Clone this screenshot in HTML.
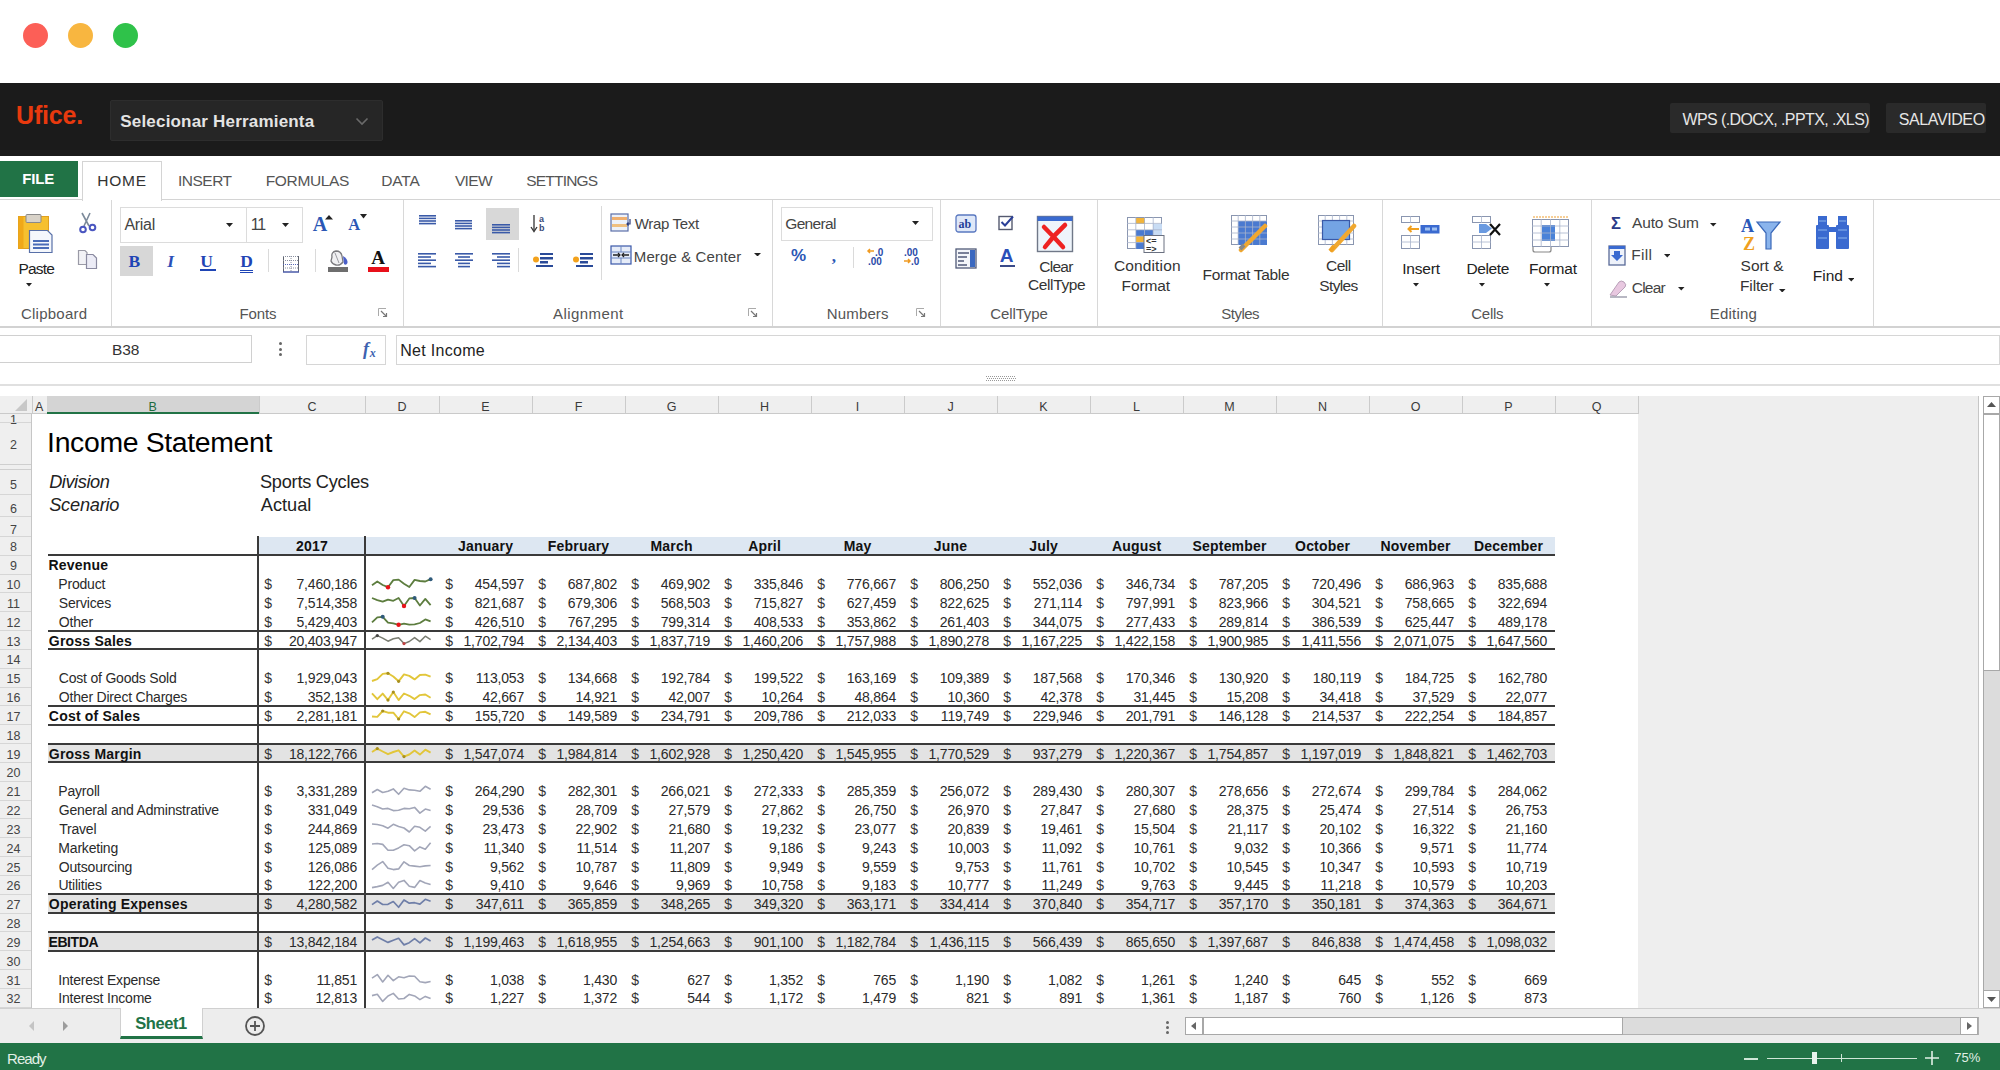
<!DOCTYPE html><html><head><meta charset="utf-8"><title>Ufice - Income Statement</title><style>
*{box-sizing:border-box;margin:0;padding:0}
html,body{width:2000px;height:1070px;overflow:hidden;background:#fff;font-family:"Liberation Sans",sans-serif;position:relative}
.abs{position:absolute}
.t{position:absolute;white-space:nowrap;line-height:1}
</style></head><body><div class="abs" style="left:23.0px;top:22.5px;width:25px;height:25px;border-radius:50%;background:#fc5f57"></div><div class="abs" style="left:68.0px;top:22.5px;width:25px;height:25px;border-radius:50%;background:#f8b640"></div><div class="abs" style="left:113.0px;top:22.5px;width:25px;height:25px;border-radius:50%;background:#2fc24a"></div><div class="abs" style="left:0px;top:83px;width:2000px;height:73px;background:#1b1b1b;"></div><div class="t" style="top:102.53px;font-size:25px;color:#e8390e;font-weight:bold;letter-spacing:-0.17px;left:16.00px;">Ufice.</div><div class="abs" style="left:110px;top:100px;width:272.5px;height:41px;background:#262626;border:1px solid #2d2d2d;border-radius:2px"></div><div class="t" style="top:112.80px;font-size:17px;color:#e4e4e4;font-weight:bold;letter-spacing:0.19px;left:120.26px;">Selecionar Herramienta</div><svg class="abs" style="left:355px;top:117px" width="14" height="9"><path d="M1.5 1.5 L7 7 L12.5 1.5" stroke="#6a6a6a" stroke-width="1.6" fill="none"/></svg><div class="abs" style="left:1670px;top:103px;width:200px;height:30px;background:#2a2a2a;border-radius:2px"></div><div class="t" style="top:111.96px;font-size:16px;color:#e6e6e6;letter-spacing:-0.60px;left:1682.43px;">WPS (.DOCX, .PPTX, .XLS)</div><div class="abs" style="left:1886px;top:103px;width:100px;height:30px;background:#2a2a2a;border-radius:2px"></div><div class="t" style="top:111.96px;font-size:16px;color:#e6e6e6;letter-spacing:-0.40px;left:1898.77px;">SALAVIDEO</div><div class="abs" style="left:0px;top:161px;width:78px;height:36px;background:#217346;"></div><div class="t" style="top:171.37px;font-size:15px;color:#ffffff;font-weight:bold;letter-spacing:-0.14px;left:22.25px;">FILE</div><div class="abs" style="left:82px;top:161px;width:80px;height:40px;background:#fff;border:1px solid #d4d4d4;border-bottom:none"></div><div class="t" style="top:173.04px;font-size:15.5px;color:#333;letter-spacing:0.81px;left:97.23px;">HOME</div><div class="t" style="top:173.04px;font-size:15.5px;color:#555;letter-spacing:-0.51px;left:178.07px;">INSERT</div><div class="t" style="top:173.04px;font-size:15.5px;color:#555;letter-spacing:-0.34px;left:265.73px;">FORMULAS</div><div class="t" style="top:173.04px;font-size:15.5px;color:#555;letter-spacing:-0.18px;left:381.23px;">DATA</div><div class="t" style="top:173.04px;font-size:15.5px;color:#555;letter-spacing:-0.66px;left:454.93px;">VIEW</div><div class="t" style="top:173.04px;font-size:15.5px;color:#555;letter-spacing:-0.80px;left:526.30px;">SETTINGS</div><div class="abs" style="left:0px;top:199px;width:82px;height:1px;background:#d4d4d4;"></div><div class="abs" style="left:161px;top:199px;width:1839px;height:1px;background:#d4d4d4;"></div><div class="abs" style="left:0px;top:326px;width:2000px;height:1.5px;background:#d2d2d2;"></div><div class="abs" style="left:111px;top:200px;width:1px;height:126px;background:#d8d8d8;"></div><div class="abs" style="left:403px;top:200px;width:1px;height:126px;background:#d8d8d8;"></div><div class="abs" style="left:772px;top:200px;width:1px;height:126px;background:#d8d8d8;"></div><div class="abs" style="left:940px;top:200px;width:1px;height:126px;background:#d8d8d8;"></div><div class="abs" style="left:1097px;top:200px;width:1px;height:126px;background:#d8d8d8;"></div><div class="abs" style="left:1382px;top:200px;width:1px;height:126px;background:#d8d8d8;"></div><div class="abs" style="left:1591px;top:200px;width:1px;height:126px;background:#d8d8d8;"></div><div class="abs" style="left:1873px;top:200px;width:1px;height:126px;background:#d8d8d8;"></div><div class="t" style="top:306.02px;font-size:15px;color:#555;letter-spacing:0.25px;left:20.94px;">Clipboard</div><div class="t" style="top:306.02px;font-size:15px;color:#555;letter-spacing:-0.11px;left:239.47px;">Fonts</div><div class="t" style="top:306.02px;font-size:15px;color:#555;letter-spacing:0.43px;left:552.97px;">Alignment</div><div class="t" style="top:306.02px;font-size:15px;color:#555;letter-spacing:0.15px;left:826.77px;">Numbers</div><div class="t" style="top:306.02px;font-size:15px;color:#555;letter-spacing:-0.11px;left:990.24px;">CellType</div><div class="t" style="top:306.02px;font-size:15px;color:#555;letter-spacing:-0.52px;left:1221.32px;">Styles</div><div class="t" style="top:306.02px;font-size:15px;color:#555;letter-spacing:-0.26px;left:1471.24px;">Cells</div><div class="t" style="top:306.02px;font-size:15px;color:#555;letter-spacing:0.22px;left:1709.77px;">Editing</div><div class="abs" style="left:-2px;top:335px;width:254px;height:28px;background:#fff;border:1px solid #d0d0d0"></div><div class="t" style="top:342.24px;font-size:15.5px;color:#333;letter-spacing:-0.07px;left:111.93px;">B38</div><div class="abs" style="left:278.7px;top:342px;width:3px;height:3px;background:#666;border-radius:50%"></div><div class="abs" style="left:278.7px;top:347.5px;width:3px;height:3px;background:#666;border-radius:50%"></div><div class="abs" style="left:278.7px;top:353px;width:3px;height:3px;background:#666;border-radius:50%"></div><div class="abs" style="left:305.5px;top:334.5px;width:80px;height:30px;background:#fff;border:1px solid #d6d6d6"></div><div class="t" style="top:339.71px;font-size:18px;color:#3d62b0;font-weight:bold;font-style:italic;font-family:'Liberation Serif',serif;left:363.00px;">f</div><div class="t" style="top:347.31px;font-size:12px;color:#3d62b0;font-weight:bold;font-style:italic;font-family:'Liberation Serif',serif;left:369.65px;">x</div><div class="abs" style="left:396px;top:334.5px;width:1604px;height:30px;background:#fff;border:1px solid #d6d6d6"></div><div class="t" style="top:342.66px;font-size:16px;color:#222;letter-spacing:0.30px;left:400.19px;">Net Income</div><div class="abs" style="left:0px;top:384px;width:2000px;height:2px;background:#e0e0e0;"></div><svg class="abs" style="left:986px;top:376px" width="30" height="6" viewBox="0 0 30 6"><rect x="0" y="0" width="1" height="1" fill="#999"/><rect x="1" y="2" width="1" height="1" fill="#999"/><rect x="0" y="4" width="1" height="1" fill="#999"/><rect x="2" y="0" width="1" height="1" fill="#999"/><rect x="3" y="2" width="1" height="1" fill="#999"/><rect x="2" y="4" width="1" height="1" fill="#999"/><rect x="4" y="0" width="1" height="1" fill="#999"/><rect x="5" y="2" width="1" height="1" fill="#999"/><rect x="4" y="4" width="1" height="1" fill="#999"/><rect x="6" y="0" width="1" height="1" fill="#999"/><rect x="7" y="2" width="1" height="1" fill="#999"/><rect x="6" y="4" width="1" height="1" fill="#999"/><rect x="8" y="0" width="1" height="1" fill="#999"/><rect x="9" y="2" width="1" height="1" fill="#999"/><rect x="8" y="4" width="1" height="1" fill="#999"/><rect x="10" y="0" width="1" height="1" fill="#999"/><rect x="11" y="2" width="1" height="1" fill="#999"/><rect x="10" y="4" width="1" height="1" fill="#999"/><rect x="12" y="0" width="1" height="1" fill="#999"/><rect x="13" y="2" width="1" height="1" fill="#999"/><rect x="12" y="4" width="1" height="1" fill="#999"/><rect x="14" y="0" width="1" height="1" fill="#999"/><rect x="15" y="2" width="1" height="1" fill="#999"/><rect x="14" y="4" width="1" height="1" fill="#999"/><rect x="16" y="0" width="1" height="1" fill="#999"/><rect x="17" y="2" width="1" height="1" fill="#999"/><rect x="16" y="4" width="1" height="1" fill="#999"/><rect x="18" y="0" width="1" height="1" fill="#999"/><rect x="19" y="2" width="1" height="1" fill="#999"/><rect x="18" y="4" width="1" height="1" fill="#999"/><rect x="20" y="0" width="1" height="1" fill="#999"/><rect x="21" y="2" width="1" height="1" fill="#999"/><rect x="20" y="4" width="1" height="1" fill="#999"/><rect x="22" y="0" width="1" height="1" fill="#999"/><rect x="23" y="2" width="1" height="1" fill="#999"/><rect x="22" y="4" width="1" height="1" fill="#999"/><rect x="24" y="0" width="1" height="1" fill="#999"/><rect x="25" y="2" width="1" height="1" fill="#999"/><rect x="24" y="4" width="1" height="1" fill="#999"/><rect x="26" y="0" width="1" height="1" fill="#999"/><rect x="27" y="2" width="1" height="1" fill="#999"/><rect x="26" y="4" width="1" height="1" fill="#999"/><rect x="28" y="0" width="1" height="1" fill="#999"/><rect x="29" y="2" width="1" height="1" fill="#999"/><rect x="28" y="4" width="1" height="1" fill="#999"/></svg><svg class="abs" style="left:17px;top:213px" width="36" height="41" viewBox="0 0 36 41"><rect x="1.5" y="3.5" width="30" height="32" fill="#f6c02f" stroke="#e0a020" stroke-width="1"/><rect x="1.5" y="3.5" width="5" height="32" fill="#f0a818"/><rect x="9" y="1.5" width="15" height="8" rx="1" fill="#d8d2c8" stroke="#8a8a8a" stroke-width="1"/><path d="M12.5 17.5 H30.5 L35 22 V39.5 H12.5 Z" fill="#f4f7fc" stroke="#5870a8" stroke-width="1.2"/><path d="M16 28 H32 M16 31.5 H32 M16 35 H32" stroke="#4a6cb8" stroke-width="2"/></svg><div class="t" style="top:260.54px;font-size:15.5px;color:#222;letter-spacing:-0.79px;left:18.43px;">Paste</div><svg class="abs" style="left:26.0px;top:283px" width="6" height="3.5"><path d="M0 0 H6 L3.0 3.5 Z" fill="#222"/></svg><svg class="abs" style="left:78px;top:212px" width="20" height="23" viewBox="0 0 20 23"><path d="M4 1 L11 14 M12 1 L6 14" stroke="#7c8a9a" stroke-width="1.6" fill="none"/><circle cx="5" cy="17.5" r="2.8" stroke="#4a56c0" stroke-width="2" fill="none"/><circle cx="14.5" cy="15.5" r="2.8" stroke="#4a56c0" stroke-width="2" fill="none"/></svg><svg class="abs" style="left:77px;top:249px" width="22" height="21" viewBox="0 0 22 21"><path d="M1.5 1.5 H8 L10 3.5 V15.5 H1.5 Z" fill="#f2f2f6" stroke="#9a9aa6" stroke-width="1.2"/><path d="M9.5 5.5 H16 L19.5 9 V19.5 H9.5 Z" fill="#ececf6" stroke="#8a8aa0" stroke-width="1.2"/></svg><div class="abs" style="left:120px;top:207px;width:127px;height:36px;background:#fff;border:1px solid #dcdcdc"></div><div class="abs" style="left:246px;top:207px;width:57px;height:36px;background:#fff;border:1px solid #dcdcdc"></div><div class="t" style="top:217.06px;font-size:16px;color:#444;letter-spacing:-0.30px;left:124.47px;">Arial</div><svg class="abs" style="left:226.0px;top:222.5px" width="7" height="4"><path d="M0 0 H7 L3.5 4 Z" fill="#222"/></svg><div class="t" style="top:217.06px;font-size:16px;color:#444;letter-spacing:-1.20px;left:250.78px;">11</div><svg class="abs" style="left:281.5px;top:222.5px" width="7" height="4"><path d="M0 0 H7 L3.5 4 Z" fill="#222"/></svg><div class="t" style="top:213.75px;font-size:20px;color:#2b57b5;font-weight:bold;font-family:'Liberation Serif',serif;left:312.80px;">A</div><svg class="abs" style="left:325px;top:214.5px" width="8" height="5" viewBox="0 0 8 5"><path d="M0 4.5 L4 0 L8 4.5 Z" fill="#222"/></svg><div class="t" style="top:216.59px;font-size:16.5px;color:#2b57b5;font-weight:bold;font-family:'Liberation Serif',serif;left:348.34px;">A</div><svg class="abs" style="left:359.5px;top:214px" width="7" height="5" viewBox="0 0 7 5"><path d="M0 0 H7 L3.5 4.5 Z" fill="#222"/></svg><div class="abs" style="left:120px;top:246px;width:33px;height:30px;background:#d7d7d7;"></div><div class="t" style="top:252.60px;font-size:17.5px;color:#1f45b5;font-weight:bold;font-family:'Liberation Serif',serif;left:128.51px;">B</div><div class="t" style="top:252.60px;font-size:17.5px;color:#2b4fb8;font-weight:bold;font-style:italic;font-family:'Liberation Serif',serif;left:167.17px;">I</div><div class="t" style="top:252.60px;font-size:17.5px;color:#1f45b5;font-weight:bold;font-family:'Liberation Serif',serif;left:200.16px;">U</div><div class="abs" style="left:200px;top:269px;width:16px;height:1.6px;background:#1f45b5;"></div><div class="t" style="top:252.60px;font-size:17.5px;color:#1f45b5;font-weight:bold;font-family:'Liberation Serif',serif;left:240.19px;">D</div><div class="abs" style="left:240px;top:269.5px;width:13px;height:1.3px;background:#1f45b5;"></div><div class="abs" style="left:240px;top:272px;width:13px;height:1.3px;background:#1f45b5;"></div><div class="abs" style="left:268px;top:249px;width:1px;height:23px;background:#dadada;"></div><svg class="abs" style="left:282px;top:255px" width="18" height="18" viewBox="0 0 18 18"><path d="M1.5 1 V17 M16.5 1 V17" stroke="#60646e" stroke-width="1"/><path d="M9 1 V17 M1 1.5 H17 M1 5.5 H17 M1 13 H17" stroke="#8a90a0" stroke-width="1" stroke-dasharray="1 1"/><path d="M1 9.5 H17" stroke="#5a6ab8" stroke-width="1" stroke-dasharray="1 1"/><path d="M1 17 H17" stroke="#4a5aa8" stroke-width="1.5"/></svg><div class="abs" style="left:315px;top:249px;width:1px;height:23px;background:#dadada;"></div><svg class="abs" style="left:327px;top:249px" width="23" height="24" viewBox="0 0 23 24"><path d="M5 8 Q4 3 9 2 Q14 2 15 7 L16 13 Q13 17 9 16 Q5 15 4 12 Z" fill="#f0f0f2" stroke="#7a7a7e" stroke-width="1.3"/><path d="M8 4 Q10 9 12 14" stroke="#9a9aa0" stroke-width="1"/><path d="M16 7 Q21 10 20.5 14 Q19 17 17 15 Z" fill="#4a5fc8"/><rect x="1" y="18" width="20" height="5" fill="#6e6e6e"/></svg><div class="t" style="top:248.13px;font-size:19px;color:#111;font-weight:bold;font-family:'Liberation Serif',serif;left:371.31px;">A</div><div class="abs" style="left:368px;top:267px;width:20.5px;height:5px;background:#e8101a;"></div><svg class="abs" style="left:378px;top:308px" width="10" height="10" viewBox="0 0 10 10"><path d="M0.5 8 V0.5 H8" stroke="#aaa" stroke-width="1" fill="none"/><path d="M3 3 L8.5 8.5 M8.5 5 V8.5 H5" stroke="#777" stroke-width="1.2" fill="none"/></svg><svg class="abs" style="left:419px;top:214.5px" width="17" height="12" viewBox="0 0 17 12"><rect x="0" y="0.0" width="17" height="1.6" fill="#3a5aa8"/><rect x="0" y="2.6" width="17" height="1.6" fill="#3a5aa8"/><rect x="0" y="5.2" width="17" height="1.6" fill="#3a5aa8"/><rect x="0" y="7.800000000000001" width="17" height="1.6" fill="#3a5aa8"/></svg><svg class="abs" style="left:455px;top:220px" width="17" height="12" viewBox="0 0 17 12"><rect x="0" y="0.0" width="17" height="1.6" fill="#3a5aa8"/><rect x="0" y="2.6" width="17" height="1.6" fill="#3a5aa8"/><rect x="0" y="5.2" width="17" height="1.6" fill="#3a5aa8"/><rect x="0" y="7.800000000000001" width="17" height="1.6" fill="#3a5aa8"/></svg><div class="abs" style="left:485.5px;top:208px;width:33px;height:31.5px;background:#d8d8d8;"></div><svg class="abs" style="left:492px;top:224px" width="18" height="12" viewBox="0 0 18 12"><rect x="0" y="0.0" width="18" height="1.6" fill="#3a5aa8"/><rect x="0" y="2.6" width="18" height="1.6" fill="#3a5aa8"/><rect x="0" y="5.2" width="18" height="1.6" fill="#3a5aa8"/><rect x="0" y="7.800000000000001" width="18" height="1.6" fill="#3a5aa8"/></svg><svg class="abs" style="left:529px;top:214px" width="20" height="20" viewBox="0 0 20 20"><path d="M5 1 V16" stroke="#333" stroke-width="1.3"/><path d="M2 13 L5 17.5 L8 13" stroke="#333" stroke-width="1.3" fill="none"/><text x="10" y="8" font-size="9" font-family="Liberation Sans" font-weight="bold" fill="#3a4a78">a</text><text x="10" y="17" font-size="9" font-family="Liberation Sans" font-weight="bold" fill="#3a4a78">b</text></svg><svg class="abs" style="left:418px;top:252.5px" width="18" height="18" viewBox="0 0 18 18"><rect x="0" y="0.0" width="18" height="1.6" fill="#3a5aa8"/><rect x="0" y="3.2" width="13" height="1.6" fill="#3a5aa8"/><rect x="0" y="6.4" width="18" height="1.6" fill="#3a5aa8"/><rect x="0" y="9.600000000000001" width="13" height="1.6" fill="#3a5aa8"/><rect x="0" y="12.8" width="18" height="1.6" fill="#3a5aa8"/></svg><svg class="abs" style="left:455px;top:252.5px" width="18" height="18" viewBox="0 0 18 18"><rect x="0.0" y="0.0" width="18" height="1.6" fill="#3a5aa8"/><rect x="3.0" y="3.2" width="12" height="1.6" fill="#3a5aa8"/><rect x="0.0" y="6.4" width="18" height="1.6" fill="#3a5aa8"/><rect x="3.0" y="9.600000000000001" width="12" height="1.6" fill="#3a5aa8"/><rect x="3.0" y="12.8" width="12" height="1.6" fill="#3a5aa8"/></svg><svg class="abs" style="left:492px;top:252.5px" width="18" height="18" viewBox="0 0 18 18"><rect x="0" y="0.0" width="18" height="1.6" fill="#3a5aa8"/><rect x="5" y="3.2" width="13" height="1.6" fill="#3a5aa8"/><rect x="0" y="6.4" width="18" height="1.6" fill="#3a5aa8"/><rect x="5" y="9.600000000000001" width="13" height="1.6" fill="#3a5aa8"/><rect x="5" y="12.8" width="13" height="1.6" fill="#3a5aa8"/></svg><div class="abs" style="left:518px;top:248px;width:1px;height:24px;background:#dadada;"></div><svg class="abs" style="left:532px;top:250px" width="22" height="20" viewBox="0 0 22 20"><rect x="8" y="3" width="13" height="2" fill="#2a4a98"/><rect x="8" y="7" width="13" height="2.5" fill="#2a4a98"/><rect x="8" y="11" width="8" height="2.5" fill="#2a4a98"/><rect x="4" y="15" width="17" height="2" fill="#2a4a98"/><circle cx="4" cy="9.5" r="3" fill="#f3a21c"/></svg><svg class="abs" style="left:572px;top:250px" width="22" height="20" viewBox="0 0 22 20"><rect x="8" y="3" width="13" height="2" fill="#2a4a98"/><rect x="8" y="7" width="13" height="2.5" fill="#2a4a98"/><rect x="8" y="11" width="8" height="2.5" fill="#2a4a98"/><rect x="4" y="15" width="17" height="2" fill="#2a4a98"/><circle cx="4" cy="9.5" r="3" fill="#f3a21c"/></svg><div class="abs" style="left:601px;top:206px;width:1px;height:74px;background:#dadada;"></div><svg class="abs" style="left:610px;top:213px" width="23" height="20" viewBox="0 0 23 20"><rect x="1" y="1" width="17" height="17" fill="#eef2fa" stroke="#5a6ea8" stroke-width="1.2"/><rect x="2" y="4" width="15" height="3" fill="#f0b070"/><rect x="2" y="11" width="15" height="3" fill="#f0c080"/><path d="M20 6 V11 H17 M18.5 9.5 L17 11 L18.5 12.5" stroke="#2a3a78" stroke-width="1.2" fill="none"/></svg><div class="t" style="top:215.52px;font-size:15px;color:#444;letter-spacing:-0.34px;left:634.83px;">Wrap Text</div><svg class="abs" style="left:610px;top:245px" width="22" height="20" viewBox="0 0 22 20"><rect x="1" y="1" width="20" height="18" fill="#e6ecf8" stroke="#3a58a8" stroke-width="1.2"/><path d="M1 7 H21 M1 13 H21 M11 1 V7 M11 13 V19" stroke="#6a86c0" stroke-width="1"/><path d="M3 10 H9 M13 10 H19" stroke="#222" stroke-width="1.4"/><path d="M8 8 L10 10 L8 12 M14 8 L12 10 L14 12" stroke="#222" stroke-width="1.2" fill="none"/></svg><div class="t" style="top:248.62px;font-size:15px;color:#444;letter-spacing:0.12px;left:633.77px;">Merge &amp; Center</div><svg class="abs" style="left:753.8px;top:252.7px" width="7" height="3.5"><path d="M0 0 H7 L3.5 3.5 Z" fill="#222"/></svg><svg class="abs" style="left:748px;top:308px" width="10" height="10" viewBox="0 0 10 10"><path d="M0.5 8 V0.5 H8" stroke="#aaa" stroke-width="1" fill="none"/><path d="M3 3 L8.5 8.5 M8.5 5 V8.5 H5" stroke="#777" stroke-width="1.2" fill="none"/></svg><div class="abs" style="left:781px;top:207px;width:152px;height:34px;background:#fff;border:1px solid #dcdcdc"></div><div class="t" style="top:216.24px;font-size:15.5px;color:#444;letter-spacing:-0.64px;left:785.22px;">General</div><svg class="abs" style="left:912.3px;top:221px" width="7" height="4"><path d="M0 0 H7 L3.5 4 Z" fill="#222"/></svg><div class="t" style="top:246.60px;font-size:17px;color:#2b57b5;font-weight:bold;left:790.88px;">%</div><div class="t" style="top:247.90px;font-size:17px;color:#2b57b5;font-weight:bold;font-family:'Liberation Serif',serif;left:831.78px;">,</div><div class="abs" style="left:852.5px;top:247px;width:1px;height:21px;background:#dadada;"></div><svg class="abs" style="left:866px;top:247px" width="22" height="20" viewBox="0 0 22 20"><path d="M2 4 H8 M4 2 L2 4 L4 6" stroke="#f09a20" stroke-width="1.5" fill="none"/><text x="9" y="8.5" font-size="10" font-family="Liberation Sans" font-weight="bold" fill="#2a4aa8">.0</text><text x="2" y="18" font-size="10" font-family="Liberation Sans" font-weight="bold" fill="#2a4aa8">.00</text></svg><svg class="abs" style="left:902px;top:247px" width="22" height="20" viewBox="0 0 22 20"><text x="2" y="8.5" font-size="10" font-family="Liberation Sans" font-weight="bold" fill="#2a4aa8">.00</text><path d="M2 14 H8 M6 12 L8 14 L6 16" stroke="#f09a20" stroke-width="1.5" fill="none"/><text x="9" y="18" font-size="10" font-family="Liberation Sans" font-weight="bold" fill="#2a4aa8">.0</text></svg><svg class="abs" style="left:916px;top:308px" width="10" height="10" viewBox="0 0 10 10"><path d="M0.5 8 V0.5 H8" stroke="#aaa" stroke-width="1" fill="none"/><path d="M3 3 L8.5 8.5 M8.5 5 V8.5 H5" stroke="#777" stroke-width="1.2" fill="none"/></svg><svg class="abs" style="left:955px;top:214px" width="23" height="20" viewBox="0 0 23 20"><rect x="1" y="1" width="20" height="17" rx="2.5" fill="#dfe8f8" stroke="#5a78c0" stroke-width="1.3"/><text x="3.5" y="14" font-size="12" font-family="Liberation Serif" font-weight="bold" fill="#1f3f98">ab</text></svg><svg class="abs" style="left:998px;top:215px" width="17" height="16" viewBox="0 0 17 16"><rect x="1" y="1.5" width="13" height="13" fill="#fff" stroke="#555a70" stroke-width="1.4"/><path d="M3.5 7 L7 10.5 L15 1.5" stroke="#2a3f98" stroke-width="2" fill="none"/></svg><svg class="abs" style="left:955px;top:248px" width="23" height="22" viewBox="0 0 23 22"><rect x="1" y="1" width="20" height="19" fill="#f4f6fa" stroke="#505a78" stroke-width="1.3"/><path d="M3 5 H14 M3 9 H12 M3 13 H9 M3 17 H12" stroke="#505a78" stroke-width="1.3"/><rect x="15" y="2" width="5" height="17" fill="#3a68c0"/></svg><div class="t" style="top:246.48px;font-size:19px;color:#2b4fb8;font-weight:bold;left:999.83px;">A</div><div class="abs" style="left:1000px;top:265px;width:15px;height:2px;background:#3a4a88;"></div><svg class="abs" style="left:1036px;top:215px" width="38" height="38" viewBox="0 0 38 38"><rect x="1.5" y="1.5" width="35" height="35" fill="#eef4fb" stroke="#707888" stroke-width="1.4"/><rect x="1.5" y="1.5" width="35" height="4.5" fill="#3a6ad0"/><path d="M8 12 Q18 22 27 32 M29 10 Q18 20 9 32" stroke="#ee2222" stroke-width="4.5" fill="none" stroke-linecap="round"/></svg><div class="t" style="top:258.74px;font-size:15.5px;color:#333;letter-spacing:-0.70px;left:1039.21px;">Clear</div><div class="t" style="top:277.34px;font-size:15.5px;color:#333;letter-spacing:-0.38px;left:1028.01px;">CellType</div><svg class="abs" style="left:1127px;top:217px" width="38" height="37" viewBox="0 0 38 37"><rect x="0.5" y="0.5" width="34" height="31" fill="#fff" stroke="#8a96b0" stroke-width="1"/><rect x="9" y="1" width="9" height="6" fill="#f2b43a"/><rect x="9" y="13" width="17" height="6" fill="#4a7ad0"/><rect x="26" y="7" width="9" height="12" fill="#c8dcf4"/><rect x="9" y="19" width="9" height="6" fill="#f2b43a"/><rect x="9" y="25" width="9" height="7" fill="#4a7ad0"/><path d="M8.8 0 V32" stroke="#a8b4cc" stroke-width="0.8"/><path d="M17.5 0 V32" stroke="#a8b4cc" stroke-width="0.8"/><path d="M26.2 0 V32" stroke="#a8b4cc" stroke-width="0.8"/><path d="M0 6.4 H35" stroke="#a8b4cc" stroke-width="0.8"/><path d="M0 12.8 H35" stroke="#a8b4cc" stroke-width="0.8"/><path d="M0 19.2 H35" stroke="#a8b4cc" stroke-width="0.8"/><path d="M0 25.6 H35" stroke="#a8b4cc" stroke-width="0.8"/><rect x="17" y="18.5" width="20" height="17" fill="#fff" stroke="#6a7080" stroke-width="1"/><text x="19" y="27" font-size="9" font-weight="bold" font-family="Liberation Sans" fill="#333">&lt;=</text><text x="19" y="34.5" font-size="9" font-weight="bold" font-family="Liberation Sans" fill="#333">=&gt;</text></svg><div class="t" style="top:257.54px;font-size:15.5px;color:#333;letter-spacing:0.14px;left:1113.91px;">Condition</div><div class="t" style="top:277.84px;font-size:15.5px;color:#333;letter-spacing:-0.10px;left:1121.53px;">Format</div><svg class="abs" style="left:1231px;top:215px" width="40" height="38" viewBox="0 0 40 38"><rect x="0.5" y="0.5" width="35" height="29" fill="#fff" stroke="#8a96b0" stroke-width="1"/><rect x="7" y="6" width="29" height="24" fill="#4a7ad0"/><path d="M7.2 0 V30" stroke="#a8b4cc" stroke-width="0.8"/><path d="M14.4 0 V30" stroke="#a8b4cc" stroke-width="0.8"/><path d="M21.6 0 V30" stroke="#a8b4cc" stroke-width="0.8"/><path d="M28.8 0 V30" stroke="#a8b4cc" stroke-width="0.8"/><path d="M0 6.0 H36" stroke="#a8b4cc" stroke-width="0.8"/><path d="M0 12.0 H36" stroke="#a8b4cc" stroke-width="0.8"/><path d="M0 18.0 H36" stroke="#a8b4cc" stroke-width="0.8"/><path d="M0 24.0 H36" stroke="#a8b4cc" stroke-width="0.8"/><path d="M10 35 L34 11" stroke="#f0a830" stroke-width="4.5" stroke-linecap="round"/><path d="M9 34 L13 30" stroke="#888" stroke-width="4"/></svg><div class="t" style="top:267.04px;font-size:15.5px;color:#333;letter-spacing:-0.28px;left:1202.53px;">Format Table</div><svg class="abs" style="left:1318px;top:215px" width="40" height="38" viewBox="0 0 40 38"><rect x="0.5" y="0.5" width="35" height="29" fill="#fff" stroke="#8a96b0" stroke-width="1"/><path d="M7.2 0 V30" stroke="#a8b4cc" stroke-width="0.8"/><path d="M14.4 0 V30" stroke="#a8b4cc" stroke-width="0.8"/><path d="M21.6 0 V30" stroke="#a8b4cc" stroke-width="0.8"/><path d="M28.8 0 V30" stroke="#a8b4cc" stroke-width="0.8"/><path d="M0 6.0 H36" stroke="#a8b4cc" stroke-width="0.8"/><path d="M0 12.0 H36" stroke="#a8b4cc" stroke-width="0.8"/><path d="M0 18.0 H36" stroke="#a8b4cc" stroke-width="0.8"/><path d="M0 24.0 H36" stroke="#a8b4cc" stroke-width="0.8"/><rect x="4.5" y="5.5" width="27" height="19" fill="#74a4e4" stroke="#3a5aa8" stroke-width="1.2"/><path d="M14 35 L36 11" stroke="#f0a830" stroke-width="4.5" stroke-linecap="round"/><path d="M12 36 L16 31" stroke="#f0a020" stroke-width="4"/></svg><div class="t" style="top:257.54px;font-size:15.5px;color:#333;letter-spacing:-0.43px;left:1325.91px;">Cell</div><div class="t" style="top:277.84px;font-size:15.5px;color:#333;letter-spacing:-0.65px;left:1319.30px;">Styles</div><svg class="abs" style="left:1401px;top:216px" width="40" height="34" viewBox="0 0 40 34"><g><rect x="0.5" y="0.5" width="18" height="6" fill="#fff" stroke="#8a96b0" stroke-width="1"/><path d="M9.5 0 V7" stroke="#a8b4cc" stroke-width="0.8"/></g><g transform="translate(0,19)"><rect x="0.5" y="0.5" width="18" height="13" fill="#fff" stroke="#8a96b0" stroke-width="1"/><path d="M9.5 0 V14" stroke="#a8b4cc" stroke-width="0.8"/><path d="M0 7.0 H19" stroke="#a8b4cc" stroke-width="0.8"/></g><rect x="19.5" y="9" width="19" height="8.5" fill="#3a6ad0"/><path d="M24 13 H29 M31 13 H36" stroke="#9ec0f0" stroke-width="3"/><path d="M8 13 H18" stroke="#f0a020" stroke-width="2"/><path d="M10.5 10 L7.5 13 L10.5 16" stroke="#f0a020" stroke-width="2" fill="none"/></svg><div class="t" style="top:260.54px;font-size:15.5px;color:#222;letter-spacing:-0.18px;left:1402.17px;">Insert</div><svg class="abs" style="left:1413.0px;top:283px" width="6" height="3.5"><path d="M0 0 H6 L3.0 3.5 Z" fill="#222"/></svg><svg class="abs" style="left:1472px;top:216px" width="32" height="34" viewBox="0 0 32 34"><g><rect x="0.5" y="0.5" width="18" height="6" fill="#fff" stroke="#8a96b0" stroke-width="1"/><path d="M9.5 0 V7" stroke="#a8b4cc" stroke-width="0.8"/></g><g transform="translate(0,19)"><rect x="0.5" y="0.5" width="18" height="13" fill="#fff" stroke="#8a96b0" stroke-width="1"/><path d="M9.5 0 V14" stroke="#a8b4cc" stroke-width="0.8"/><path d="M0 7.0 H19" stroke="#a8b4cc" stroke-width="0.8"/></g><path d="M7 8 H14 L20 12.5 L14 17 H7 Z" fill="#6a9ae0"/><path d="M18 8 L28 19 M28 8 L18 19" stroke="#111" stroke-width="2.2"/></svg><div class="t" style="top:260.54px;font-size:15.5px;color:#222;letter-spacing:-0.39px;left:1466.43px;">Delete</div><svg class="abs" style="left:1478.6px;top:283px" width="6" height="3.5"><path d="M0 0 H6 L3.0 3.5 Z" fill="#222"/></svg><svg class="abs" style="left:1532px;top:215px" width="38" height="38" viewBox="0 0 38 38"><path d="M1 2 H37" stroke="#f0a030" stroke-width="1.2" stroke-dasharray="2 1"/><g transform="translate(0,4)"><rect x="0.5" y="0.5" width="36" height="27" fill="#fff" stroke="#8a96b0" stroke-width="1"/><rect x="10" y="6" width="13" height="16" fill="#4a82d8"/><path d="M9.2 0 V28" stroke="#a8b4cc" stroke-width="0.8"/><path d="M18.5 0 V28" stroke="#a8b4cc" stroke-width="0.8"/><path d="M27.8 0 V28" stroke="#a8b4cc" stroke-width="0.8"/><path d="M0 7.0 H37" stroke="#a8b4cc" stroke-width="0.8"/><path d="M0 14.0 H37" stroke="#a8b4cc" stroke-width="0.8"/><path d="M0 21.0 H37" stroke="#a8b4cc" stroke-width="0.8"/></g><path d="M1 32 V35 Q1 37 3 37 H17 Q19 37 19 35 V32" stroke="#888" stroke-width="1.2" fill="#fff"/></svg><div class="t" style="top:260.54px;font-size:15.5px;color:#222;letter-spacing:-0.20px;left:1528.93px;">Format</div><svg class="abs" style="left:1544.0px;top:283px" width="6" height="3.5"><path d="M0 0 H6 L3.0 3.5 Z" fill="#222"/></svg><div class="t" style="top:214.88px;font-size:16.5px;color:#2a3a88;font-weight:bold;left:1611.07px;">&#931;</div><div class="t" style="top:215.04px;font-size:15.5px;color:#444;letter-spacing:-0.17px;left:1632.07px;">Auto Sum</div><svg class="abs" style="left:1710.35px;top:223px" width="6.5" height="3.5"><path d="M0 0 H6.5 L3.25 3.5 Z" fill="#222"/></svg><svg class="abs" style="left:1608px;top:245px" width="18" height="21" viewBox="0 0 18 21"><rect x="1" y="1" width="16" height="19" fill="#eef2fa" stroke="#5a6a98" stroke-width="1.3"/><rect x="1" y="1" width="16" height="3" fill="#3a6ad0"/><path d="M6 6 H12 V10 H15 L9 16 L3 10 H6 Z" fill="#3a6ad0"/></svg><div class="t" style="top:247.24px;font-size:15.5px;color:#444;letter-spacing:0.34px;left:1631.23px;">Fill</div><svg class="abs" style="left:1663.55px;top:254px" width="6.5" height="3.5"><path d="M0 0 H6.5 L3.25 3.5 Z" fill="#222"/></svg><svg class="abs" style="left:1607px;top:279px" width="21" height="19" viewBox="0 0 21 19"><path d="M3 16 L12 3 Q14 1 17 3 Q20 6 18 8 L9 17 Z" fill="#e8c8e0" stroke="#b8a0b8" stroke-width="1"/><path d="M3 18 H20" stroke="#9a9aaa" stroke-width="1.4"/></svg><div class="t" style="top:280.14px;font-size:15.5px;color:#444;letter-spacing:-0.75px;left:1631.71px;">Clear</div><svg class="abs" style="left:1678.25px;top:287px" width="6.5" height="3.5"><path d="M0 0 H6.5 L3.25 3.5 Z" fill="#222"/></svg><svg class="abs" style="left:1741px;top:216px" width="42" height="36" viewBox="0 0 42 36"><text x="0" y="16" font-size="18" font-family="Liberation Serif" font-weight="bold" fill="#2a58b8">A</text><text x="2" y="34" font-size="18" font-family="Liberation Serif" font-weight="bold" fill="#f0a020">Z</text><path d="M16 6 H39 L30 17 V33 H25 V17 Z" fill="#8ab4ec" stroke="#3a68b8" stroke-width="1.2"/></svg><div class="t" style="top:257.74px;font-size:15.5px;color:#333;letter-spacing:-0.03px;left:1740.60px;">Sort &amp;</div><div class="t" style="top:278.04px;font-size:15.5px;color:#333;letter-spacing:-0.14px;left:1740.03px;">Filter</div><svg class="abs" style="left:1779.25px;top:288.5px" width="6.5" height="3.5"><path d="M0 0 H6.5 L3.25 3.5 Z" fill="#222"/></svg><svg class="abs" style="left:1815px;top:216px" width="35" height="34" viewBox="0 0 35 34"><rect x="3" y="0" width="9" height="10" fill="#3a6ad0"/><rect x="23" y="0" width="9" height="10" fill="#3a6ad0"/><rect x="1" y="9" width="13" height="24" rx="1" fill="#3a6ad0"/><rect x="21" y="9" width="13" height="24" rx="1" fill="#3a6ad0"/><rect x="12" y="11" width="11" height="5" fill="#3a6ad0"/><path d="M4 5 H11 M24 5 H31 M3 14 H12 M23 14 H32 M3 22 H12 M23 22 H32" stroke="#8ab4ec" stroke-width="1.2"/></svg><div class="t" style="top:267.54px;font-size:15.5px;color:#222;letter-spacing:0.04px;left:1812.73px;">Find</div><svg class="abs" style="left:1847.75px;top:278.4px" width="6.5" height="3.5"><path d="M0 0 H6.5 L3.25 3.5 Z" fill="#222"/></svg><div class="abs" style="left:0px;top:396px;width:1638px;height:612px;background:#fff;"></div><div class="abs" style="left:1638px;top:396px;width:341px;height:612px;background:#eeeeee;border-right:1px solid #c6c6c6"></div><div class="abs" style="left:32px;top:396px;width:1606px;height:18px;background:#efefef;border-bottom:1px solid #cacaca"></div><div class="abs" style="left:46.5px;top:396px;width:212.5px;height:18px;background:#d4d4d4;border-bottom:2px solid #217346"></div><div class="abs" style="left:0px;top:396px;width:32px;height:18px;background:#efefef;border-bottom:1px solid #cacaca"></div><svg class="abs" style="left:14px;top:398px" width="14" height="14" viewBox="0 0 14 14"><path d="M13 1 L13 13 L1 13 Z" fill="#c8c8c8"/></svg><div class="t" style="top:401.02px;font-size:12.5px;color:#3a3a3a;left:34.98px;">A</div><div class="t" style="top:401.02px;font-size:12.5px;color:#1e6b3f;left:-147.25px;width:600px;text-align:center;">B</div><div class="t" style="top:401.02px;font-size:12.5px;color:#3a3a3a;left:12.00px;width:600px;text-align:center;">C</div><div class="abs" style="left:258.5px;top:396px;width:1px;height:18px;background:#cbcbcb;"></div><div class="t" style="top:401.02px;font-size:12.5px;color:#3a3a3a;left:102.00px;width:600px;text-align:center;">D</div><div class="abs" style="left:364.5px;top:396px;width:1px;height:18px;background:#cbcbcb;"></div><div class="t" style="top:401.02px;font-size:12.5px;color:#3a3a3a;left:185.50px;width:600px;text-align:center;">E</div><div class="abs" style="left:438.5px;top:396px;width:1px;height:18px;background:#cbcbcb;"></div><div class="t" style="top:401.02px;font-size:12.5px;color:#3a3a3a;left:278.50px;width:600px;text-align:center;">F</div><div class="abs" style="left:531.5px;top:396px;width:1px;height:18px;background:#cbcbcb;"></div><div class="t" style="top:401.02px;font-size:12.5px;color:#3a3a3a;left:371.50px;width:600px;text-align:center;">G</div><div class="abs" style="left:624.5px;top:396px;width:1px;height:18px;background:#cbcbcb;"></div><div class="t" style="top:401.02px;font-size:12.5px;color:#3a3a3a;left:464.50px;width:600px;text-align:center;">H</div><div class="abs" style="left:717.5px;top:396px;width:1px;height:18px;background:#cbcbcb;"></div><div class="t" style="top:401.02px;font-size:12.5px;color:#3a3a3a;left:557.50px;width:600px;text-align:center;">I</div><div class="abs" style="left:810.5px;top:396px;width:1px;height:18px;background:#cbcbcb;"></div><div class="t" style="top:401.02px;font-size:12.5px;color:#3a3a3a;left:650.50px;width:600px;text-align:center;">J</div><div class="abs" style="left:903.5px;top:396px;width:1px;height:18px;background:#cbcbcb;"></div><div class="t" style="top:401.02px;font-size:12.5px;color:#3a3a3a;left:743.50px;width:600px;text-align:center;">K</div><div class="abs" style="left:996.5px;top:396px;width:1px;height:18px;background:#cbcbcb;"></div><div class="t" style="top:401.02px;font-size:12.5px;color:#3a3a3a;left:836.50px;width:600px;text-align:center;">L</div><div class="abs" style="left:1089.5px;top:396px;width:1px;height:18px;background:#cbcbcb;"></div><div class="t" style="top:401.02px;font-size:12.5px;color:#3a3a3a;left:929.50px;width:600px;text-align:center;">M</div><div class="abs" style="left:1182.5px;top:396px;width:1px;height:18px;background:#cbcbcb;"></div><div class="t" style="top:401.02px;font-size:12.5px;color:#3a3a3a;left:1022.50px;width:600px;text-align:center;">N</div><div class="abs" style="left:1275.5px;top:396px;width:1px;height:18px;background:#cbcbcb;"></div><div class="t" style="top:401.02px;font-size:12.5px;color:#3a3a3a;left:1115.50px;width:600px;text-align:center;">O</div><div class="abs" style="left:1368.5px;top:396px;width:1px;height:18px;background:#cbcbcb;"></div><div class="t" style="top:401.02px;font-size:12.5px;color:#3a3a3a;left:1208.50px;width:600px;text-align:center;">P</div><div class="abs" style="left:1461.5px;top:396px;width:1px;height:18px;background:#cbcbcb;"></div><div class="t" style="top:401.02px;font-size:12.5px;color:#3a3a3a;left:1296.50px;width:600px;text-align:center;">Q</div><div class="abs" style="left:1554.5px;top:396px;width:1px;height:18px;background:#cbcbcb;"></div><div class="abs" style="left:1637.5px;top:396px;width:1px;height:18px;background:#cbcbcb;"></div><div class="abs" style="left:32px;top:396px;width:1px;height:18px;background:#cbcbcb;"></div><div class="abs" style="left:0px;top:414px;width:32px;height:594px;background:#efefef;border-right:1px solid #c6c6c6"></div><div class="t" style="top:413.57px;font-size:12.5px;color:#444;left:-286.50px;width:600px;text-align:center;">1</div><div class="abs" style="left:0px;top:421.5px;width:31px;height:1px;background:#d6d6d6;"></div><div class="t" style="top:438.82px;font-size:12.5px;color:#444;left:-286.50px;width:600px;text-align:center;">2</div><div class="abs" style="left:0px;top:464.0px;width:31px;height:1px;background:#d6d6d6;"></div><div class="abs" style="left:0px;top:464px;width:31px;height:1px;background:#cfcfcf;"></div><div class="abs" style="left:0px;top:468.5px;width:31px;height:1px;background:#cfcfcf;"></div><div class="t" style="top:478.62px;font-size:12.5px;color:#444;left:-286.50px;width:600px;text-align:center;">5</div><div class="abs" style="left:0px;top:494.0px;width:31px;height:1px;background:#d6d6d6;"></div><div class="t" style="top:502.52px;font-size:12.5px;color:#444;left:-286.50px;width:600px;text-align:center;">6</div><div class="abs" style="left:0px;top:516.3px;width:31px;height:1px;background:#d6d6d6;"></div><div class="t" style="top:523.52px;font-size:12.5px;color:#444;left:-286.50px;width:600px;text-align:center;">7</div><div class="abs" style="left:0px;top:536.0px;width:31px;height:1px;background:#d6d6d6;"></div><div class="t" style="top:541.48px;font-size:12.5px;color:#444;left:-286.50px;width:600px;text-align:center;">8</div><div class="abs" style="left:0px;top:554.83px;width:31px;height:1px;background:#d6d6d6;"></div><div class="t" style="top:560.31px;font-size:12.5px;color:#444;left:-286.50px;width:600px;text-align:center;">9</div><div class="abs" style="left:0px;top:573.6600000000001px;width:31px;height:1px;background:#d6d6d6;"></div><div class="t" style="top:579.14px;font-size:12.5px;color:#444;left:-286.50px;width:600px;text-align:center;">10</div><div class="abs" style="left:0px;top:592.49px;width:31px;height:1px;background:#d6d6d6;"></div><div class="t" style="top:597.97px;font-size:12.5px;color:#444;left:-286.50px;width:600px;text-align:center;">11</div><div class="abs" style="left:0px;top:611.32px;width:31px;height:1px;background:#d6d6d6;"></div><div class="t" style="top:616.80px;font-size:12.5px;color:#444;left:-286.50px;width:600px;text-align:center;">12</div><div class="abs" style="left:0px;top:630.15px;width:31px;height:1px;background:#d6d6d6;"></div><div class="t" style="top:635.63px;font-size:12.5px;color:#444;left:-286.50px;width:600px;text-align:center;">13</div><div class="abs" style="left:0px;top:648.98px;width:31px;height:1px;background:#d6d6d6;"></div><div class="t" style="top:654.46px;font-size:12.5px;color:#444;left:-286.50px;width:600px;text-align:center;">14</div><div class="abs" style="left:0px;top:667.8100000000001px;width:31px;height:1px;background:#d6d6d6;"></div><div class="t" style="top:673.29px;font-size:12.5px;color:#444;left:-286.50px;width:600px;text-align:center;">15</div><div class="abs" style="left:0px;top:686.64px;width:31px;height:1px;background:#d6d6d6;"></div><div class="t" style="top:692.12px;font-size:12.5px;color:#444;left:-286.50px;width:600px;text-align:center;">16</div><div class="abs" style="left:0px;top:705.47px;width:31px;height:1px;background:#d6d6d6;"></div><div class="t" style="top:710.95px;font-size:12.5px;color:#444;left:-286.50px;width:600px;text-align:center;">17</div><div class="abs" style="left:0px;top:724.3000000000001px;width:31px;height:1px;background:#d6d6d6;"></div><div class="t" style="top:729.78px;font-size:12.5px;color:#444;left:-286.50px;width:600px;text-align:center;">18</div><div class="abs" style="left:0px;top:743.13px;width:31px;height:1px;background:#d6d6d6;"></div><div class="t" style="top:748.61px;font-size:12.5px;color:#444;left:-286.50px;width:600px;text-align:center;">19</div><div class="abs" style="left:0px;top:761.96px;width:31px;height:1px;background:#d6d6d6;"></div><div class="t" style="top:767.44px;font-size:12.5px;color:#444;left:-286.50px;width:600px;text-align:center;">20</div><div class="abs" style="left:0px;top:780.7900000000001px;width:31px;height:1px;background:#d6d6d6;"></div><div class="t" style="top:786.27px;font-size:12.5px;color:#444;left:-286.50px;width:600px;text-align:center;">21</div><div class="abs" style="left:0px;top:799.62px;width:31px;height:1px;background:#d6d6d6;"></div><div class="t" style="top:805.10px;font-size:12.5px;color:#444;left:-286.50px;width:600px;text-align:center;">22</div><div class="abs" style="left:0px;top:818.45px;width:31px;height:1px;background:#d6d6d6;"></div><div class="t" style="top:823.93px;font-size:12.5px;color:#444;left:-286.50px;width:600px;text-align:center;">23</div><div class="abs" style="left:0px;top:837.2800000000001px;width:31px;height:1px;background:#d6d6d6;"></div><div class="t" style="top:842.76px;font-size:12.5px;color:#444;left:-286.50px;width:600px;text-align:center;">24</div><div class="abs" style="left:0px;top:856.11px;width:31px;height:1px;background:#d6d6d6;"></div><div class="t" style="top:861.59px;font-size:12.5px;color:#444;left:-286.50px;width:600px;text-align:center;">25</div><div class="abs" style="left:0px;top:874.9399999999999px;width:31px;height:1px;background:#d6d6d6;"></div><div class="t" style="top:880.42px;font-size:12.5px;color:#444;left:-286.50px;width:600px;text-align:center;">26</div><div class="abs" style="left:0px;top:893.77px;width:31px;height:1px;background:#d6d6d6;"></div><div class="t" style="top:899.25px;font-size:12.5px;color:#444;left:-286.50px;width:600px;text-align:center;">27</div><div class="abs" style="left:0px;top:912.6px;width:31px;height:1px;background:#d6d6d6;"></div><div class="t" style="top:918.08px;font-size:12.5px;color:#444;left:-286.50px;width:600px;text-align:center;">28</div><div class="abs" style="left:0px;top:931.43px;width:31px;height:1px;background:#d6d6d6;"></div><div class="t" style="top:936.91px;font-size:12.5px;color:#444;left:-286.50px;width:600px;text-align:center;">29</div><div class="abs" style="left:0px;top:950.26px;width:31px;height:1px;background:#d6d6d6;"></div><div class="t" style="top:955.74px;font-size:12.5px;color:#444;left:-286.50px;width:600px;text-align:center;">30</div><div class="abs" style="left:0px;top:969.09px;width:31px;height:1px;background:#d6d6d6;"></div><div class="t" style="top:974.57px;font-size:12.5px;color:#444;left:-286.50px;width:600px;text-align:center;">31</div><div class="abs" style="left:0px;top:987.92px;width:31px;height:1px;background:#d6d6d6;"></div><div class="t" style="top:993.40px;font-size:12.5px;color:#444;left:-286.50px;width:600px;text-align:center;">32</div><div class="abs" style="left:0px;top:1006.75px;width:31px;height:1px;background:#d6d6d6;"></div><div class="t" style="top:428.49px;font-size:28.4px;color:#000;letter-spacing:-0.34px;left:47.08px;">Income Statement</div><div class="t" style="top:473.41px;font-size:18.2px;color:#222;font-style:italic;letter-spacing:-0.43px;left:49.14px;">Division</div><div class="t" style="top:473.41px;font-size:18.2px;color:#222;letter-spacing:-0.25px;left:259.97px;">Sports Cycles</div><div class="t" style="top:496.11px;font-size:18.2px;color:#222;font-style:italic;letter-spacing:-0.21px;left:49.18px;">Scenario</div><div class="t" style="top:496.11px;font-size:18.2px;color:#222;left:260.76px;">Actual</div><div class="abs" style="left:259px;top:536.5px;width:1296px;height:18.83px;background:#dde7f2;"></div><div class="t" style="top:539.48px;font-size:14px;color:#111;font-weight:bold;letter-spacing:0.20px;left:12.10px;width:600px;text-align:center;">2017</div><div class="t" style="top:539.48px;font-size:14px;color:#111;font-weight:bold;letter-spacing:0.20px;left:185.60px;width:600px;text-align:center;">January</div><div class="t" style="top:539.48px;font-size:14px;color:#111;font-weight:bold;letter-spacing:0.20px;left:278.60px;width:600px;text-align:center;">February</div><div class="t" style="top:539.48px;font-size:14px;color:#111;font-weight:bold;letter-spacing:0.20px;left:371.60px;width:600px;text-align:center;">March</div><div class="t" style="top:539.48px;font-size:14px;color:#111;font-weight:bold;letter-spacing:0.20px;left:464.60px;width:600px;text-align:center;">April</div><div class="t" style="top:539.48px;font-size:14px;color:#111;font-weight:bold;letter-spacing:0.20px;left:557.60px;width:600px;text-align:center;">May</div><div class="t" style="top:539.48px;font-size:14px;color:#111;font-weight:bold;letter-spacing:0.20px;left:650.60px;width:600px;text-align:center;">June</div><div class="t" style="top:539.48px;font-size:14px;color:#111;font-weight:bold;letter-spacing:0.20px;left:743.60px;width:600px;text-align:center;">July</div><div class="t" style="top:539.48px;font-size:14px;color:#111;font-weight:bold;letter-spacing:0.20px;left:836.60px;width:600px;text-align:center;">August</div><div class="t" style="top:539.48px;font-size:14px;color:#111;font-weight:bold;letter-spacing:0.20px;left:929.60px;width:600px;text-align:center;">September</div><div class="t" style="top:539.48px;font-size:14px;color:#111;font-weight:bold;letter-spacing:0.20px;left:1022.60px;width:600px;text-align:center;">October</div><div class="t" style="top:539.48px;font-size:14px;color:#111;font-weight:bold;letter-spacing:0.20px;left:1115.60px;width:600px;text-align:center;">November</div><div class="t" style="top:539.48px;font-size:14px;color:#111;font-weight:bold;letter-spacing:0.20px;left:1208.60px;width:600px;text-align:center;">December</div><div class="abs" style="left:48px;top:743.63px;width:1507px;height:18.83px;background:#e3e3e3;"></div><div class="abs" style="left:48px;top:894.27px;width:1507px;height:18.83px;background:#e3e3e3;"></div><div class="abs" style="left:48px;top:931.93px;width:1507px;height:18.83px;background:#e3e3e3;"></div><div class="abs" style="left:48px;top:554px;width:1507px;height:2px;background:#3a3a3a;"></div><div class="abs" style="left:48px;top:630px;width:1507px;height:2px;background:#3a3a3a;"></div><div class="abs" style="left:48px;top:648px;width:1507px;height:2px;background:#3a3a3a;"></div><div class="abs" style="left:48px;top:705px;width:1507px;height:2px;background:#3a3a3a;"></div><div class="abs" style="left:48px;top:724px;width:1507px;height:2px;background:#3a3a3a;"></div><div class="abs" style="left:48px;top:743px;width:1507px;height:2px;background:#3a3a3a;"></div><div class="abs" style="left:48px;top:761px;width:1507px;height:2px;background:#3a3a3a;"></div><div class="abs" style="left:48px;top:893px;width:1507px;height:2px;background:#3a3a3a;"></div><div class="abs" style="left:48px;top:912px;width:1507px;height:2px;background:#3a3a3a;"></div><div class="abs" style="left:48px;top:931px;width:1507px;height:2px;background:#3a3a3a;"></div><div class="abs" style="left:48px;top:950px;width:1507px;height:2px;background:#3a3a3a;"></div><div class="abs" style="left:257px;top:536px;width:2px;height:472px;background:#3a3a3a;"></div><div class="abs" style="left:364px;top:536px;width:2px;height:472px;background:#3a3a3a;"></div><div class="t" style="top:558.31px;font-size:14px;color:#111;font-weight:bold;letter-spacing:0.20px;left:48.46px;">Revenue</div><div class="t" style="top:577.14px;font-size:14px;color:#2a2a2a;letter-spacing:-0.20px;left:58.35px;">Product</div><div class="t" style="top:577.14px;font-size:14px;color:#333;left:264.35px;">$</div><div class="t" style="top:577.14px;font-size:14px;color:#2a2a2a;letter-spacing:-0.20px;left:-243.00px;width:600px;text-align:right;">7,460,186</div><div class="t" style="top:577.14px;font-size:14px;color:#333;left:445.35px;">$</div><div class="t" style="top:577.14px;font-size:14px;color:#2a2a2a;letter-spacing:-0.20px;left:-76.00px;width:600px;text-align:right;">454,597</div><div class="t" style="top:577.14px;font-size:14px;color:#333;left:538.35px;">$</div><div class="t" style="top:577.14px;font-size:14px;color:#2a2a2a;letter-spacing:-0.20px;left:17.00px;width:600px;text-align:right;">687,802</div><div class="t" style="top:577.14px;font-size:14px;color:#333;left:631.35px;">$</div><div class="t" style="top:577.14px;font-size:14px;color:#2a2a2a;letter-spacing:-0.20px;left:110.00px;width:600px;text-align:right;">469,902</div><div class="t" style="top:577.14px;font-size:14px;color:#333;left:724.35px;">$</div><div class="t" style="top:577.14px;font-size:14px;color:#2a2a2a;letter-spacing:-0.20px;left:203.00px;width:600px;text-align:right;">335,846</div><div class="t" style="top:577.14px;font-size:14px;color:#333;left:817.35px;">$</div><div class="t" style="top:577.14px;font-size:14px;color:#2a2a2a;letter-spacing:-0.20px;left:296.00px;width:600px;text-align:right;">776,667</div><div class="t" style="top:577.14px;font-size:14px;color:#333;left:910.35px;">$</div><div class="t" style="top:577.14px;font-size:14px;color:#2a2a2a;letter-spacing:-0.20px;left:389.00px;width:600px;text-align:right;">806,250</div><div class="t" style="top:577.14px;font-size:14px;color:#333;left:1003.35px;">$</div><div class="t" style="top:577.14px;font-size:14px;color:#2a2a2a;letter-spacing:-0.20px;left:482.00px;width:600px;text-align:right;">552,036</div><div class="t" style="top:577.14px;font-size:14px;color:#333;left:1096.35px;">$</div><div class="t" style="top:577.14px;font-size:14px;color:#2a2a2a;letter-spacing:-0.20px;left:575.00px;width:600px;text-align:right;">346,734</div><div class="t" style="top:577.14px;font-size:14px;color:#333;left:1189.35px;">$</div><div class="t" style="top:577.14px;font-size:14px;color:#2a2a2a;letter-spacing:-0.20px;left:668.00px;width:600px;text-align:right;">787,205</div><div class="t" style="top:577.14px;font-size:14px;color:#333;left:1282.35px;">$</div><div class="t" style="top:577.14px;font-size:14px;color:#2a2a2a;letter-spacing:-0.20px;left:761.00px;width:600px;text-align:right;">720,496</div><div class="t" style="top:577.14px;font-size:14px;color:#333;left:1375.35px;">$</div><div class="t" style="top:577.14px;font-size:14px;color:#2a2a2a;letter-spacing:-0.20px;left:854.00px;width:600px;text-align:right;">686,963</div><div class="t" style="top:577.14px;font-size:14px;color:#333;left:1468.35px;">$</div><div class="t" style="top:577.14px;font-size:14px;color:#2a2a2a;letter-spacing:-0.20px;left:947.00px;width:600px;text-align:right;">835,688</div><svg class="abs" style="left:0;top:0;overflow:visible" width="1" height="1"><path d="M372.0 585.3 L377.3 581.5 L382.7 585.0 L388.0 587.2 L393.3 580.1 L398.6 579.6 L404.0 583.7 L409.3 587.0 L414.6 579.9 L419.9 581.0 L425.3 581.5 L430.6 579.2" stroke="#5d7d3f" stroke-width="1.8" fill="none" stroke-linejoin="round"/><circle cx="388.0" cy="587.2" r="2.2" fill="#e8141a"/><circle cx="430.6" cy="579.2" r="2" fill="#2f5a7a"/></svg><div class="t" style="top:595.97px;font-size:14px;color:#2a2a2a;letter-spacing:-0.20px;left:58.86px;">Services</div><div class="t" style="top:595.97px;font-size:14px;color:#333;left:264.35px;">$</div><div class="t" style="top:595.97px;font-size:14px;color:#2a2a2a;letter-spacing:-0.20px;left:-243.00px;width:600px;text-align:right;">7,514,358</div><div class="t" style="top:595.97px;font-size:14px;color:#333;left:445.35px;">$</div><div class="t" style="top:595.97px;font-size:14px;color:#2a2a2a;letter-spacing:-0.20px;left:-76.00px;width:600px;text-align:right;">821,687</div><div class="t" style="top:595.97px;font-size:14px;color:#333;left:538.35px;">$</div><div class="t" style="top:595.97px;font-size:14px;color:#2a2a2a;letter-spacing:-0.20px;left:17.00px;width:600px;text-align:right;">679,306</div><div class="t" style="top:595.97px;font-size:14px;color:#333;left:631.35px;">$</div><div class="t" style="top:595.97px;font-size:14px;color:#2a2a2a;letter-spacing:-0.20px;left:110.00px;width:600px;text-align:right;">568,503</div><div class="t" style="top:595.97px;font-size:14px;color:#333;left:724.35px;">$</div><div class="t" style="top:595.97px;font-size:14px;color:#2a2a2a;letter-spacing:-0.20px;left:203.00px;width:600px;text-align:right;">715,827</div><div class="t" style="top:595.97px;font-size:14px;color:#333;left:817.35px;">$</div><div class="t" style="top:595.97px;font-size:14px;color:#2a2a2a;letter-spacing:-0.20px;left:296.00px;width:600px;text-align:right;">627,459</div><div class="t" style="top:595.97px;font-size:14px;color:#333;left:910.35px;">$</div><div class="t" style="top:595.97px;font-size:14px;color:#2a2a2a;letter-spacing:-0.20px;left:389.00px;width:600px;text-align:right;">822,625</div><div class="t" style="top:595.97px;font-size:14px;color:#333;left:1003.35px;">$</div><div class="t" style="top:595.97px;font-size:14px;color:#2a2a2a;letter-spacing:-0.20px;left:482.00px;width:600px;text-align:right;">271,114</div><div class="t" style="top:595.97px;font-size:14px;color:#333;left:1096.35px;">$</div><div class="t" style="top:595.97px;font-size:14px;color:#2a2a2a;letter-spacing:-0.20px;left:575.00px;width:600px;text-align:right;">797,991</div><div class="t" style="top:595.97px;font-size:14px;color:#333;left:1189.35px;">$</div><div class="t" style="top:595.97px;font-size:14px;color:#2a2a2a;letter-spacing:-0.20px;left:668.00px;width:600px;text-align:right;">823,966</div><div class="t" style="top:595.97px;font-size:14px;color:#333;left:1282.35px;">$</div><div class="t" style="top:595.97px;font-size:14px;color:#2a2a2a;letter-spacing:-0.20px;left:761.00px;width:600px;text-align:right;">304,521</div><div class="t" style="top:595.97px;font-size:14px;color:#333;left:1375.35px;">$</div><div class="t" style="top:595.97px;font-size:14px;color:#2a2a2a;letter-spacing:-0.20px;left:854.00px;width:600px;text-align:right;">758,665</div><div class="t" style="top:595.97px;font-size:14px;color:#333;left:1468.35px;">$</div><div class="t" style="top:595.97px;font-size:14px;color:#2a2a2a;letter-spacing:-0.20px;left:947.00px;width:600px;text-align:right;">322,694</div><svg class="abs" style="left:0;top:0;overflow:visible" width="1" height="1"><path d="M372.0 598.0 L377.3 600.1 L382.7 601.7 L388.0 599.6 L393.3 600.8 L398.6 598.0 L404.0 606.0 L409.3 598.4 L414.6 598.0 L419.9 605.5 L425.3 598.9 L430.6 605.2" stroke="#5d7d3f" stroke-width="1.8" fill="none" stroke-linejoin="round"/><circle cx="404.0" cy="606.0" r="2.2" fill="#e8141a"/><circle cx="414.6" cy="598.0" r="2" fill="#2f5a7a"/></svg><div class="t" style="top:614.80px;font-size:14px;color:#2a2a2a;letter-spacing:-0.20px;left:58.84px;">Other</div><div class="t" style="top:614.80px;font-size:14px;color:#333;left:264.35px;">$</div><div class="t" style="top:614.80px;font-size:14px;color:#2a2a2a;letter-spacing:-0.20px;left:-243.00px;width:600px;text-align:right;">5,429,403</div><div class="t" style="top:614.80px;font-size:14px;color:#333;left:445.35px;">$</div><div class="t" style="top:614.80px;font-size:14px;color:#2a2a2a;letter-spacing:-0.20px;left:-76.00px;width:600px;text-align:right;">426,510</div><div class="t" style="top:614.80px;font-size:14px;color:#333;left:538.35px;">$</div><div class="t" style="top:614.80px;font-size:14px;color:#2a2a2a;letter-spacing:-0.20px;left:17.00px;width:600px;text-align:right;">767,295</div><div class="t" style="top:614.80px;font-size:14px;color:#333;left:631.35px;">$</div><div class="t" style="top:614.80px;font-size:14px;color:#2a2a2a;letter-spacing:-0.20px;left:110.00px;width:600px;text-align:right;">799,314</div><div class="t" style="top:614.80px;font-size:14px;color:#333;left:724.35px;">$</div><div class="t" style="top:614.80px;font-size:14px;color:#2a2a2a;letter-spacing:-0.20px;left:203.00px;width:600px;text-align:right;">408,533</div><div class="t" style="top:614.80px;font-size:14px;color:#333;left:817.35px;">$</div><div class="t" style="top:614.80px;font-size:14px;color:#2a2a2a;letter-spacing:-0.20px;left:296.00px;width:600px;text-align:right;">353,862</div><div class="t" style="top:614.80px;font-size:14px;color:#333;left:910.35px;">$</div><div class="t" style="top:614.80px;font-size:14px;color:#2a2a2a;letter-spacing:-0.20px;left:389.00px;width:600px;text-align:right;">261,403</div><div class="t" style="top:614.80px;font-size:14px;color:#333;left:1003.35px;">$</div><div class="t" style="top:614.80px;font-size:14px;color:#2a2a2a;letter-spacing:-0.20px;left:482.00px;width:600px;text-align:right;">344,075</div><div class="t" style="top:614.80px;font-size:14px;color:#333;left:1096.35px;">$</div><div class="t" style="top:614.80px;font-size:14px;color:#2a2a2a;letter-spacing:-0.20px;left:575.00px;width:600px;text-align:right;">277,433</div><div class="t" style="top:614.80px;font-size:14px;color:#333;left:1189.35px;">$</div><div class="t" style="top:614.80px;font-size:14px;color:#2a2a2a;letter-spacing:-0.20px;left:668.00px;width:600px;text-align:right;">289,814</div><div class="t" style="top:614.80px;font-size:14px;color:#333;left:1282.35px;">$</div><div class="t" style="top:614.80px;font-size:14px;color:#2a2a2a;letter-spacing:-0.20px;left:761.00px;width:600px;text-align:right;">386,539</div><div class="t" style="top:614.80px;font-size:14px;color:#333;left:1375.35px;">$</div><div class="t" style="top:614.80px;font-size:14px;color:#2a2a2a;letter-spacing:-0.20px;left:854.00px;width:600px;text-align:right;">625,447</div><div class="t" style="top:614.80px;font-size:14px;color:#333;left:1468.35px;">$</div><div class="t" style="top:614.80px;font-size:14px;color:#2a2a2a;letter-spacing:-0.20px;left:947.00px;width:600px;text-align:right;">489,178</div><svg class="abs" style="left:0;top:0;overflow:visible" width="1" height="1"><path d="M372.0 622.4 L377.3 617.3 L382.7 616.8 L388.0 622.6 L393.3 623.4 L398.6 624.8 L404.0 623.6 L409.3 624.6 L414.6 624.4 L419.9 623.0 L425.3 619.4 L430.6 621.4" stroke="#5d7d3f" stroke-width="1.8" fill="none" stroke-linejoin="round"/><circle cx="398.6" cy="624.8" r="2.2" fill="#e8141a"/><circle cx="382.7" cy="616.8" r="2" fill="#2f5a7a"/></svg><div class="t" style="top:633.63px;font-size:14px;color:#111;font-weight:bold;letter-spacing:0.20px;left:48.83px;">Gross Sales</div><div class="t" style="top:633.63px;font-size:14px;color:#333;left:264.35px;">$</div><div class="t" style="top:633.63px;font-size:14px;color:#2a2a2a;letter-spacing:-0.20px;left:-243.00px;width:600px;text-align:right;">20,403,947</div><div class="t" style="top:633.63px;font-size:14px;color:#333;left:445.35px;">$</div><div class="t" style="top:633.63px;font-size:14px;color:#2a2a2a;letter-spacing:-0.20px;left:-76.00px;width:600px;text-align:right;">1,702,794</div><div class="t" style="top:633.63px;font-size:14px;color:#333;left:538.35px;">$</div><div class="t" style="top:633.63px;font-size:14px;color:#2a2a2a;letter-spacing:-0.20px;left:17.00px;width:600px;text-align:right;">2,134,403</div><div class="t" style="top:633.63px;font-size:14px;color:#333;left:631.35px;">$</div><div class="t" style="top:633.63px;font-size:14px;color:#2a2a2a;letter-spacing:-0.20px;left:110.00px;width:600px;text-align:right;">1,837,719</div><div class="t" style="top:633.63px;font-size:14px;color:#333;left:724.35px;">$</div><div class="t" style="top:633.63px;font-size:14px;color:#2a2a2a;letter-spacing:-0.20px;left:203.00px;width:600px;text-align:right;">1,460,206</div><div class="t" style="top:633.63px;font-size:14px;color:#333;left:817.35px;">$</div><div class="t" style="top:633.63px;font-size:14px;color:#2a2a2a;letter-spacing:-0.20px;left:296.00px;width:600px;text-align:right;">1,757,988</div><div class="t" style="top:633.63px;font-size:14px;color:#333;left:910.35px;">$</div><div class="t" style="top:633.63px;font-size:14px;color:#2a2a2a;letter-spacing:-0.20px;left:389.00px;width:600px;text-align:right;">1,890,278</div><div class="t" style="top:633.63px;font-size:14px;color:#333;left:1003.35px;">$</div><div class="t" style="top:633.63px;font-size:14px;color:#2a2a2a;letter-spacing:-0.20px;left:482.00px;width:600px;text-align:right;">1,167,225</div><div class="t" style="top:633.63px;font-size:14px;color:#333;left:1096.35px;">$</div><div class="t" style="top:633.63px;font-size:14px;color:#2a2a2a;letter-spacing:-0.20px;left:575.00px;width:600px;text-align:right;">1,422,158</div><div class="t" style="top:633.63px;font-size:14px;color:#333;left:1189.35px;">$</div><div class="t" style="top:633.63px;font-size:14px;color:#2a2a2a;letter-spacing:-0.20px;left:668.00px;width:600px;text-align:right;">1,900,985</div><div class="t" style="top:633.63px;font-size:14px;color:#333;left:1282.35px;">$</div><div class="t" style="top:633.63px;font-size:14px;color:#2a2a2a;letter-spacing:-0.20px;left:761.00px;width:600px;text-align:right;">1,411,556</div><div class="t" style="top:633.63px;font-size:14px;color:#333;left:1375.35px;">$</div><div class="t" style="top:633.63px;font-size:14px;color:#2a2a2a;letter-spacing:-0.20px;left:854.00px;width:600px;text-align:right;">2,071,075</div><div class="t" style="top:633.63px;font-size:14px;color:#333;left:1468.35px;">$</div><div class="t" style="top:633.63px;font-size:14px;color:#2a2a2a;letter-spacing:-0.20px;left:947.00px;width:600px;text-align:right;">1,647,560</div><svg class="abs" style="left:0;top:0;overflow:visible" width="1" height="1"><path d="M372.0 639.2 L377.3 635.6 L382.7 638.1 L388.0 641.2 L393.3 638.8 L398.6 637.7 L404.0 643.6 L409.3 641.5 L414.6 637.6 L419.9 641.6 L425.3 636.2 L430.6 639.7" stroke="#7a7d72" stroke-width="1.5" fill="none" stroke-linejoin="round"/><circle cx="404.0" cy="643.6" r="1.6" fill="#c04040"/><circle cx="377.3" cy="635.6" r="1.6" fill="#444"/></svg><div class="t" style="top:671.29px;font-size:14px;color:#2a2a2a;letter-spacing:-0.20px;left:58.79px;">Cost of Goods Sold</div><div class="t" style="top:671.29px;font-size:14px;color:#333;left:264.35px;">$</div><div class="t" style="top:671.29px;font-size:14px;color:#2a2a2a;letter-spacing:-0.20px;left:-243.00px;width:600px;text-align:right;">1,929,043</div><div class="t" style="top:671.29px;font-size:14px;color:#333;left:445.35px;">$</div><div class="t" style="top:671.29px;font-size:14px;color:#2a2a2a;letter-spacing:-0.20px;left:-76.00px;width:600px;text-align:right;">113,053</div><div class="t" style="top:671.29px;font-size:14px;color:#333;left:538.35px;">$</div><div class="t" style="top:671.29px;font-size:14px;color:#2a2a2a;letter-spacing:-0.20px;left:17.00px;width:600px;text-align:right;">134,668</div><div class="t" style="top:671.29px;font-size:14px;color:#333;left:631.35px;">$</div><div class="t" style="top:671.29px;font-size:14px;color:#2a2a2a;letter-spacing:-0.20px;left:110.00px;width:600px;text-align:right;">192,784</div><div class="t" style="top:671.29px;font-size:14px;color:#333;left:724.35px;">$</div><div class="t" style="top:671.29px;font-size:14px;color:#2a2a2a;letter-spacing:-0.20px;left:203.00px;width:600px;text-align:right;">199,522</div><div class="t" style="top:671.29px;font-size:14px;color:#333;left:817.35px;">$</div><div class="t" style="top:671.29px;font-size:14px;color:#2a2a2a;letter-spacing:-0.20px;left:296.00px;width:600px;text-align:right;">163,169</div><div class="t" style="top:671.29px;font-size:14px;color:#333;left:910.35px;">$</div><div class="t" style="top:671.29px;font-size:14px;color:#2a2a2a;letter-spacing:-0.20px;left:389.00px;width:600px;text-align:right;">109,389</div><div class="t" style="top:671.29px;font-size:14px;color:#333;left:1003.35px;">$</div><div class="t" style="top:671.29px;font-size:14px;color:#2a2a2a;letter-spacing:-0.20px;left:482.00px;width:600px;text-align:right;">187,568</div><div class="t" style="top:671.29px;font-size:14px;color:#333;left:1096.35px;">$</div><div class="t" style="top:671.29px;font-size:14px;color:#2a2a2a;letter-spacing:-0.20px;left:575.00px;width:600px;text-align:right;">170,346</div><div class="t" style="top:671.29px;font-size:14px;color:#333;left:1189.35px;">$</div><div class="t" style="top:671.29px;font-size:14px;color:#2a2a2a;letter-spacing:-0.20px;left:668.00px;width:600px;text-align:right;">130,920</div><div class="t" style="top:671.29px;font-size:14px;color:#333;left:1282.35px;">$</div><div class="t" style="top:671.29px;font-size:14px;color:#2a2a2a;letter-spacing:-0.20px;left:761.00px;width:600px;text-align:right;">180,119</div><div class="t" style="top:671.29px;font-size:14px;color:#333;left:1375.35px;">$</div><div class="t" style="top:671.29px;font-size:14px;color:#2a2a2a;letter-spacing:-0.20px;left:854.00px;width:600px;text-align:right;">184,725</div><div class="t" style="top:671.29px;font-size:14px;color:#333;left:1468.35px;">$</div><div class="t" style="top:671.29px;font-size:14px;color:#2a2a2a;letter-spacing:-0.20px;left:947.00px;width:600px;text-align:right;">162,780</div><svg class="abs" style="left:0;top:0;overflow:visible" width="1" height="1"><path d="M372.0 681.0 L377.3 679.1 L382.7 673.9 L388.0 673.3 L393.3 676.5 L398.6 681.3 L404.0 674.4 L409.3 675.9 L414.6 679.4 L419.9 675.0 L425.3 674.6 L430.6 676.6" stroke="#e2c63a" stroke-width="1.9" fill="none" stroke-linejoin="round"/><circle cx="398.6" cy="681.3" r="1.6" fill="#a89020"/><circle cx="388.0" cy="673.3" r="1.6" fill="#a89020"/></svg><div class="t" style="top:690.12px;font-size:14px;color:#2a2a2a;letter-spacing:-0.20px;left:58.84px;">Other Direct Charges</div><div class="t" style="top:690.12px;font-size:14px;color:#333;left:264.35px;">$</div><div class="t" style="top:690.12px;font-size:14px;color:#2a2a2a;letter-spacing:-0.20px;left:-243.00px;width:600px;text-align:right;">352,138</div><div class="t" style="top:690.12px;font-size:14px;color:#333;left:445.35px;">$</div><div class="t" style="top:690.12px;font-size:14px;color:#2a2a2a;letter-spacing:-0.20px;left:-76.00px;width:600px;text-align:right;">42,667</div><div class="t" style="top:690.12px;font-size:14px;color:#333;left:538.35px;">$</div><div class="t" style="top:690.12px;font-size:14px;color:#2a2a2a;letter-spacing:-0.20px;left:17.00px;width:600px;text-align:right;">14,921</div><div class="t" style="top:690.12px;font-size:14px;color:#333;left:631.35px;">$</div><div class="t" style="top:690.12px;font-size:14px;color:#2a2a2a;letter-spacing:-0.20px;left:110.00px;width:600px;text-align:right;">42,007</div><div class="t" style="top:690.12px;font-size:14px;color:#333;left:724.35px;">$</div><div class="t" style="top:690.12px;font-size:14px;color:#2a2a2a;letter-spacing:-0.20px;left:203.00px;width:600px;text-align:right;">10,264</div><div class="t" style="top:690.12px;font-size:14px;color:#333;left:817.35px;">$</div><div class="t" style="top:690.12px;font-size:14px;color:#2a2a2a;letter-spacing:-0.20px;left:296.00px;width:600px;text-align:right;">48,864</div><div class="t" style="top:690.12px;font-size:14px;color:#333;left:910.35px;">$</div><div class="t" style="top:690.12px;font-size:14px;color:#2a2a2a;letter-spacing:-0.20px;left:389.00px;width:600px;text-align:right;">10,360</div><div class="t" style="top:690.12px;font-size:14px;color:#333;left:1003.35px;">$</div><div class="t" style="top:690.12px;font-size:14px;color:#2a2a2a;letter-spacing:-0.20px;left:482.00px;width:600px;text-align:right;">42,378</div><div class="t" style="top:690.12px;font-size:14px;color:#333;left:1096.35px;">$</div><div class="t" style="top:690.12px;font-size:14px;color:#2a2a2a;letter-spacing:-0.20px;left:575.00px;width:600px;text-align:right;">31,445</div><div class="t" style="top:690.12px;font-size:14px;color:#333;left:1189.35px;">$</div><div class="t" style="top:690.12px;font-size:14px;color:#2a2a2a;letter-spacing:-0.20px;left:668.00px;width:600px;text-align:right;">15,208</div><div class="t" style="top:690.12px;font-size:14px;color:#333;left:1282.35px;">$</div><div class="t" style="top:690.12px;font-size:14px;color:#2a2a2a;letter-spacing:-0.20px;left:761.00px;width:600px;text-align:right;">34,418</div><div class="t" style="top:690.12px;font-size:14px;color:#333;left:1375.35px;">$</div><div class="t" style="top:690.12px;font-size:14px;color:#2a2a2a;letter-spacing:-0.20px;left:854.00px;width:600px;text-align:right;">37,529</div><div class="t" style="top:690.12px;font-size:14px;color:#333;left:1468.35px;">$</div><div class="t" style="top:690.12px;font-size:14px;color:#2a2a2a;letter-spacing:-0.20px;left:947.00px;width:600px;text-align:right;">22,077</div><svg class="abs" style="left:0;top:0;overflow:visible" width="1" height="1"><path d="M372.0 693.4 L377.3 699.2 L382.7 693.6 L388.0 700.1 L393.3 692.1 L398.6 700.1 L404.0 693.5 L409.3 695.8 L414.6 699.1 L419.9 695.1 L425.3 694.5 L430.6 697.7" stroke="#e2c63a" stroke-width="1.9" fill="none" stroke-linejoin="round"/><circle cx="388.0" cy="700.1" r="1.6" fill="#a89020"/><circle cx="393.3" cy="692.1" r="1.6" fill="#a89020"/></svg><div class="t" style="top:708.95px;font-size:14px;color:#111;font-weight:bold;letter-spacing:0.20px;left:48.83px;">Cost of Sales</div><div class="t" style="top:708.95px;font-size:14px;color:#333;left:264.35px;">$</div><div class="t" style="top:708.95px;font-size:14px;color:#2a2a2a;letter-spacing:-0.20px;left:-243.00px;width:600px;text-align:right;">2,281,181</div><div class="t" style="top:708.95px;font-size:14px;color:#333;left:445.35px;">$</div><div class="t" style="top:708.95px;font-size:14px;color:#2a2a2a;letter-spacing:-0.20px;left:-76.00px;width:600px;text-align:right;">155,720</div><div class="t" style="top:708.95px;font-size:14px;color:#333;left:538.35px;">$</div><div class="t" style="top:708.95px;font-size:14px;color:#2a2a2a;letter-spacing:-0.20px;left:17.00px;width:600px;text-align:right;">149,589</div><div class="t" style="top:708.95px;font-size:14px;color:#333;left:631.35px;">$</div><div class="t" style="top:708.95px;font-size:14px;color:#2a2a2a;letter-spacing:-0.20px;left:110.00px;width:600px;text-align:right;">234,791</div><div class="t" style="top:708.95px;font-size:14px;color:#333;left:724.35px;">$</div><div class="t" style="top:708.95px;font-size:14px;color:#2a2a2a;letter-spacing:-0.20px;left:203.00px;width:600px;text-align:right;">209,786</div><div class="t" style="top:708.95px;font-size:14px;color:#333;left:817.35px;">$</div><div class="t" style="top:708.95px;font-size:14px;color:#2a2a2a;letter-spacing:-0.20px;left:296.00px;width:600px;text-align:right;">212,033</div><div class="t" style="top:708.95px;font-size:14px;color:#333;left:910.35px;">$</div><div class="t" style="top:708.95px;font-size:14px;color:#2a2a2a;letter-spacing:-0.20px;left:389.00px;width:600px;text-align:right;">119,749</div><div class="t" style="top:708.95px;font-size:14px;color:#333;left:1003.35px;">$</div><div class="t" style="top:708.95px;font-size:14px;color:#2a2a2a;letter-spacing:-0.20px;left:482.00px;width:600px;text-align:right;">229,946</div><div class="t" style="top:708.95px;font-size:14px;color:#333;left:1096.35px;">$</div><div class="t" style="top:708.95px;font-size:14px;color:#2a2a2a;letter-spacing:-0.20px;left:575.00px;width:600px;text-align:right;">201,791</div><div class="t" style="top:708.95px;font-size:14px;color:#333;left:1189.35px;">$</div><div class="t" style="top:708.95px;font-size:14px;color:#2a2a2a;letter-spacing:-0.20px;left:668.00px;width:600px;text-align:right;">146,128</div><div class="t" style="top:708.95px;font-size:14px;color:#333;left:1282.35px;">$</div><div class="t" style="top:708.95px;font-size:14px;color:#2a2a2a;letter-spacing:-0.20px;left:761.00px;width:600px;text-align:right;">214,537</div><div class="t" style="top:708.95px;font-size:14px;color:#333;left:1375.35px;">$</div><div class="t" style="top:708.95px;font-size:14px;color:#2a2a2a;letter-spacing:-0.20px;left:854.00px;width:600px;text-align:right;">222,254</div><div class="t" style="top:708.95px;font-size:14px;color:#333;left:1468.35px;">$</div><div class="t" style="top:708.95px;font-size:14px;color:#2a2a2a;letter-spacing:-0.20px;left:947.00px;width:600px;text-align:right;">184,857</div><svg class="abs" style="left:0;top:0;overflow:visible" width="1" height="1"><path d="M372.0 716.5 L377.3 716.9 L382.7 711.0 L388.0 712.7 L393.3 712.6 L398.6 719.0 L404.0 711.3 L409.3 713.3 L414.6 717.1 L419.9 712.4 L425.3 711.8 L430.6 714.4" stroke="#e2c63a" stroke-width="1.9" fill="none" stroke-linejoin="round"/><circle cx="398.6" cy="719.0" r="1.6" fill="#a89020"/><circle cx="382.7" cy="711.0" r="1.6" fill="#a89020"/></svg><div class="t" style="top:746.61px;font-size:14px;color:#111;font-weight:bold;letter-spacing:0.20px;left:48.83px;">Gross Margin</div><div class="t" style="top:746.61px;font-size:14px;color:#333;left:264.35px;">$</div><div class="t" style="top:746.61px;font-size:14px;color:#2a2a2a;letter-spacing:-0.20px;left:-243.00px;width:600px;text-align:right;">18,122,766</div><div class="t" style="top:746.61px;font-size:14px;color:#333;left:445.35px;">$</div><div class="t" style="top:746.61px;font-size:14px;color:#2a2a2a;letter-spacing:-0.20px;left:-76.00px;width:600px;text-align:right;">1,547,074</div><div class="t" style="top:746.61px;font-size:14px;color:#333;left:538.35px;">$</div><div class="t" style="top:746.61px;font-size:14px;color:#2a2a2a;letter-spacing:-0.20px;left:17.00px;width:600px;text-align:right;">1,984,814</div><div class="t" style="top:746.61px;font-size:14px;color:#333;left:631.35px;">$</div><div class="t" style="top:746.61px;font-size:14px;color:#2a2a2a;letter-spacing:-0.20px;left:110.00px;width:600px;text-align:right;">1,602,928</div><div class="t" style="top:746.61px;font-size:14px;color:#333;left:724.35px;">$</div><div class="t" style="top:746.61px;font-size:14px;color:#2a2a2a;letter-spacing:-0.20px;left:203.00px;width:600px;text-align:right;">1,250,420</div><div class="t" style="top:746.61px;font-size:14px;color:#333;left:817.35px;">$</div><div class="t" style="top:746.61px;font-size:14px;color:#2a2a2a;letter-spacing:-0.20px;left:296.00px;width:600px;text-align:right;">1,545,955</div><div class="t" style="top:746.61px;font-size:14px;color:#333;left:910.35px;">$</div><div class="t" style="top:746.61px;font-size:14px;color:#2a2a2a;letter-spacing:-0.20px;left:389.00px;width:600px;text-align:right;">1,770,529</div><div class="t" style="top:746.61px;font-size:14px;color:#333;left:1003.35px;">$</div><div class="t" style="top:746.61px;font-size:14px;color:#2a2a2a;letter-spacing:-0.20px;left:482.00px;width:600px;text-align:right;">937,279</div><div class="t" style="top:746.61px;font-size:14px;color:#333;left:1096.35px;">$</div><div class="t" style="top:746.61px;font-size:14px;color:#2a2a2a;letter-spacing:-0.20px;left:575.00px;width:600px;text-align:right;">1,220,367</div><div class="t" style="top:746.61px;font-size:14px;color:#333;left:1189.35px;">$</div><div class="t" style="top:746.61px;font-size:14px;color:#2a2a2a;letter-spacing:-0.20px;left:668.00px;width:600px;text-align:right;">1,754,857</div><div class="t" style="top:746.61px;font-size:14px;color:#333;left:1282.35px;">$</div><div class="t" style="top:746.61px;font-size:14px;color:#2a2a2a;letter-spacing:-0.20px;left:761.00px;width:600px;text-align:right;">1,197,019</div><div class="t" style="top:746.61px;font-size:14px;color:#333;left:1375.35px;">$</div><div class="t" style="top:746.61px;font-size:14px;color:#2a2a2a;letter-spacing:-0.20px;left:854.00px;width:600px;text-align:right;">1,848,821</div><div class="t" style="top:746.61px;font-size:14px;color:#333;left:1468.35px;">$</div><div class="t" style="top:746.61px;font-size:14px;color:#2a2a2a;letter-spacing:-0.20px;left:947.00px;width:600px;text-align:right;">1,462,703</div><svg class="abs" style="left:0;top:0;overflow:visible" width="1" height="1"><path d="M372.0 752.0 L377.3 748.6 L382.7 751.5 L388.0 754.2 L393.3 752.0 L398.6 750.3 L404.0 756.6 L409.3 754.5 L414.6 750.4 L419.9 754.6 L425.3 749.7 L430.6 752.6" stroke="#e2c63a" stroke-width="1.9" fill="none" stroke-linejoin="round"/><circle cx="404.0" cy="756.6" r="1.6" fill="#a89020"/><circle cx="377.3" cy="748.6" r="1.6" fill="#a89020"/></svg><div class="t" style="top:784.27px;font-size:14px;color:#2a2a2a;letter-spacing:-0.20px;left:58.35px;">Payroll</div><div class="t" style="top:784.27px;font-size:14px;color:#333;left:264.35px;">$</div><div class="t" style="top:784.27px;font-size:14px;color:#2a2a2a;letter-spacing:-0.20px;left:-243.00px;width:600px;text-align:right;">3,331,289</div><div class="t" style="top:784.27px;font-size:14px;color:#333;left:445.35px;">$</div><div class="t" style="top:784.27px;font-size:14px;color:#2a2a2a;letter-spacing:-0.20px;left:-76.00px;width:600px;text-align:right;">264,290</div><div class="t" style="top:784.27px;font-size:14px;color:#333;left:538.35px;">$</div><div class="t" style="top:784.27px;font-size:14px;color:#2a2a2a;letter-spacing:-0.20px;left:17.00px;width:600px;text-align:right;">282,301</div><div class="t" style="top:784.27px;font-size:14px;color:#333;left:631.35px;">$</div><div class="t" style="top:784.27px;font-size:14px;color:#2a2a2a;letter-spacing:-0.20px;left:110.00px;width:600px;text-align:right;">266,021</div><div class="t" style="top:784.27px;font-size:14px;color:#333;left:724.35px;">$</div><div class="t" style="top:784.27px;font-size:14px;color:#2a2a2a;letter-spacing:-0.20px;left:203.00px;width:600px;text-align:right;">272,333</div><div class="t" style="top:784.27px;font-size:14px;color:#333;left:817.35px;">$</div><div class="t" style="top:784.27px;font-size:14px;color:#2a2a2a;letter-spacing:-0.20px;left:296.00px;width:600px;text-align:right;">285,359</div><div class="t" style="top:784.27px;font-size:14px;color:#333;left:910.35px;">$</div><div class="t" style="top:784.27px;font-size:14px;color:#2a2a2a;letter-spacing:-0.20px;left:389.00px;width:600px;text-align:right;">256,072</div><div class="t" style="top:784.27px;font-size:14px;color:#333;left:1003.35px;">$</div><div class="t" style="top:784.27px;font-size:14px;color:#2a2a2a;letter-spacing:-0.20px;left:482.00px;width:600px;text-align:right;">289,430</div><div class="t" style="top:784.27px;font-size:14px;color:#333;left:1096.35px;">$</div><div class="t" style="top:784.27px;font-size:14px;color:#2a2a2a;letter-spacing:-0.20px;left:575.00px;width:600px;text-align:right;">280,307</div><div class="t" style="top:784.27px;font-size:14px;color:#333;left:1189.35px;">$</div><div class="t" style="top:784.27px;font-size:14px;color:#2a2a2a;letter-spacing:-0.20px;left:668.00px;width:600px;text-align:right;">278,656</div><div class="t" style="top:784.27px;font-size:14px;color:#333;left:1282.35px;">$</div><div class="t" style="top:784.27px;font-size:14px;color:#2a2a2a;letter-spacing:-0.20px;left:761.00px;width:600px;text-align:right;">272,674</div><div class="t" style="top:784.27px;font-size:14px;color:#333;left:1375.35px;">$</div><div class="t" style="top:784.27px;font-size:14px;color:#2a2a2a;letter-spacing:-0.20px;left:854.00px;width:600px;text-align:right;">299,784</div><div class="t" style="top:784.27px;font-size:14px;color:#333;left:1468.35px;">$</div><div class="t" style="top:784.27px;font-size:14px;color:#2a2a2a;letter-spacing:-0.20px;left:947.00px;width:600px;text-align:right;">284,062</div><svg class="abs" style="left:0;top:0;overflow:visible" width="1" height="1"><path d="M372.0 792.8 L377.3 789.5 L382.7 792.5 L388.0 791.3 L393.3 788.9 L398.6 794.3 L404.0 788.2 L409.3 789.9 L414.6 790.2 L419.9 791.3 L425.3 786.3 L430.6 789.2" stroke="#a2a6b8" stroke-width="1.6" fill="none" stroke-linejoin="round"/></svg><div class="t" style="top:803.10px;font-size:14px;color:#2a2a2a;letter-spacing:-0.20px;left:58.80px;">General and Adminstrative</div><div class="t" style="top:803.10px;font-size:14px;color:#333;left:264.35px;">$</div><div class="t" style="top:803.10px;font-size:14px;color:#2a2a2a;letter-spacing:-0.20px;left:-243.00px;width:600px;text-align:right;">331,049</div><div class="t" style="top:803.10px;font-size:14px;color:#333;left:445.35px;">$</div><div class="t" style="top:803.10px;font-size:14px;color:#2a2a2a;letter-spacing:-0.20px;left:-76.00px;width:600px;text-align:right;">29,536</div><div class="t" style="top:803.10px;font-size:14px;color:#333;left:538.35px;">$</div><div class="t" style="top:803.10px;font-size:14px;color:#2a2a2a;letter-spacing:-0.20px;left:17.00px;width:600px;text-align:right;">28,709</div><div class="t" style="top:803.10px;font-size:14px;color:#333;left:631.35px;">$</div><div class="t" style="top:803.10px;font-size:14px;color:#2a2a2a;letter-spacing:-0.20px;left:110.00px;width:600px;text-align:right;">27,579</div><div class="t" style="top:803.10px;font-size:14px;color:#333;left:724.35px;">$</div><div class="t" style="top:803.10px;font-size:14px;color:#2a2a2a;letter-spacing:-0.20px;left:203.00px;width:600px;text-align:right;">27,862</div><div class="t" style="top:803.10px;font-size:14px;color:#333;left:817.35px;">$</div><div class="t" style="top:803.10px;font-size:14px;color:#2a2a2a;letter-spacing:-0.20px;left:296.00px;width:600px;text-align:right;">26,750</div><div class="t" style="top:803.10px;font-size:14px;color:#333;left:910.35px;">$</div><div class="t" style="top:803.10px;font-size:14px;color:#2a2a2a;letter-spacing:-0.20px;left:389.00px;width:600px;text-align:right;">26,970</div><div class="t" style="top:803.10px;font-size:14px;color:#333;left:1003.35px;">$</div><div class="t" style="top:803.10px;font-size:14px;color:#2a2a2a;letter-spacing:-0.20px;left:482.00px;width:600px;text-align:right;">27,847</div><div class="t" style="top:803.10px;font-size:14px;color:#333;left:1096.35px;">$</div><div class="t" style="top:803.10px;font-size:14px;color:#2a2a2a;letter-spacing:-0.20px;left:575.00px;width:600px;text-align:right;">27,680</div><div class="t" style="top:803.10px;font-size:14px;color:#333;left:1189.35px;">$</div><div class="t" style="top:803.10px;font-size:14px;color:#2a2a2a;letter-spacing:-0.20px;left:668.00px;width:600px;text-align:right;">28,375</div><div class="t" style="top:803.10px;font-size:14px;color:#333;left:1282.35px;">$</div><div class="t" style="top:803.10px;font-size:14px;color:#2a2a2a;letter-spacing:-0.20px;left:761.00px;width:600px;text-align:right;">25,474</div><div class="t" style="top:803.10px;font-size:14px;color:#333;left:1375.35px;">$</div><div class="t" style="top:803.10px;font-size:14px;color:#2a2a2a;letter-spacing:-0.20px;left:854.00px;width:600px;text-align:right;">27,514</div><div class="t" style="top:803.10px;font-size:14px;color:#333;left:1468.35px;">$</div><div class="t" style="top:803.10px;font-size:14px;color:#2a2a2a;letter-spacing:-0.20px;left:947.00px;width:600px;text-align:right;">26,753</div><svg class="abs" style="left:0;top:0;overflow:visible" width="1" height="1"><path d="M372.0 805.1 L377.3 806.7 L382.7 809.0 L388.0 808.4 L393.3 810.6 L398.6 810.2 L404.0 808.4 L409.3 808.8 L414.6 807.4 L419.9 813.1 L425.3 809.1 L430.6 810.6" stroke="#a2a6b8" stroke-width="1.6" fill="none" stroke-linejoin="round"/></svg><div class="t" style="top:821.93px;font-size:14px;color:#2a2a2a;letter-spacing:-0.20px;left:59.19px;">Travel</div><div class="t" style="top:821.93px;font-size:14px;color:#333;left:264.35px;">$</div><div class="t" style="top:821.93px;font-size:14px;color:#2a2a2a;letter-spacing:-0.20px;left:-243.00px;width:600px;text-align:right;">244,869</div><div class="t" style="top:821.93px;font-size:14px;color:#333;left:445.35px;">$</div><div class="t" style="top:821.93px;font-size:14px;color:#2a2a2a;letter-spacing:-0.20px;left:-76.00px;width:600px;text-align:right;">23,473</div><div class="t" style="top:821.93px;font-size:14px;color:#333;left:538.35px;">$</div><div class="t" style="top:821.93px;font-size:14px;color:#2a2a2a;letter-spacing:-0.20px;left:17.00px;width:600px;text-align:right;">22,902</div><div class="t" style="top:821.93px;font-size:14px;color:#333;left:631.35px;">$</div><div class="t" style="top:821.93px;font-size:14px;color:#2a2a2a;letter-spacing:-0.20px;left:110.00px;width:600px;text-align:right;">21,680</div><div class="t" style="top:821.93px;font-size:14px;color:#333;left:724.35px;">$</div><div class="t" style="top:821.93px;font-size:14px;color:#2a2a2a;letter-spacing:-0.20px;left:203.00px;width:600px;text-align:right;">19,232</div><div class="t" style="top:821.93px;font-size:14px;color:#333;left:817.35px;">$</div><div class="t" style="top:821.93px;font-size:14px;color:#2a2a2a;letter-spacing:-0.20px;left:296.00px;width:600px;text-align:right;">23,077</div><div class="t" style="top:821.93px;font-size:14px;color:#333;left:910.35px;">$</div><div class="t" style="top:821.93px;font-size:14px;color:#2a2a2a;letter-spacing:-0.20px;left:389.00px;width:600px;text-align:right;">20,839</div><div class="t" style="top:821.93px;font-size:14px;color:#333;left:1003.35px;">$</div><div class="t" style="top:821.93px;font-size:14px;color:#2a2a2a;letter-spacing:-0.20px;left:482.00px;width:600px;text-align:right;">19,461</div><div class="t" style="top:821.93px;font-size:14px;color:#333;left:1096.35px;">$</div><div class="t" style="top:821.93px;font-size:14px;color:#2a2a2a;letter-spacing:-0.20px;left:575.00px;width:600px;text-align:right;">15,504</div><div class="t" style="top:821.93px;font-size:14px;color:#333;left:1189.35px;">$</div><div class="t" style="top:821.93px;font-size:14px;color:#2a2a2a;letter-spacing:-0.20px;left:668.00px;width:600px;text-align:right;">21,117</div><div class="t" style="top:821.93px;font-size:14px;color:#333;left:1282.35px;">$</div><div class="t" style="top:821.93px;font-size:14px;color:#2a2a2a;letter-spacing:-0.20px;left:761.00px;width:600px;text-align:right;">20,102</div><div class="t" style="top:821.93px;font-size:14px;color:#333;left:1375.35px;">$</div><div class="t" style="top:821.93px;font-size:14px;color:#2a2a2a;letter-spacing:-0.20px;left:854.00px;width:600px;text-align:right;">16,322</div><div class="t" style="top:821.93px;font-size:14px;color:#333;left:1468.35px;">$</div><div class="t" style="top:821.93px;font-size:14px;color:#2a2a2a;letter-spacing:-0.20px;left:947.00px;width:600px;text-align:right;">21,160</div><svg class="abs" style="left:0;top:0;overflow:visible" width="1" height="1"><path d="M372.0 824.0 L377.3 824.5 L382.7 825.7 L388.0 828.2 L393.3 824.3 L398.6 826.6 L404.0 828.0 L409.3 832.0 L414.6 826.3 L419.9 827.3 L425.3 831.1 L430.6 826.3" stroke="#a2a6b8" stroke-width="1.6" fill="none" stroke-linejoin="round"/></svg><div class="t" style="top:840.76px;font-size:14px;color:#2a2a2a;letter-spacing:-0.20px;left:58.35px;">Marketing</div><div class="t" style="top:840.76px;font-size:14px;color:#333;left:264.35px;">$</div><div class="t" style="top:840.76px;font-size:14px;color:#2a2a2a;letter-spacing:-0.20px;left:-243.00px;width:600px;text-align:right;">125,089</div><div class="t" style="top:840.76px;font-size:14px;color:#333;left:445.35px;">$</div><div class="t" style="top:840.76px;font-size:14px;color:#2a2a2a;letter-spacing:-0.20px;left:-76.00px;width:600px;text-align:right;">11,340</div><div class="t" style="top:840.76px;font-size:14px;color:#333;left:538.35px;">$</div><div class="t" style="top:840.76px;font-size:14px;color:#2a2a2a;letter-spacing:-0.20px;left:17.00px;width:600px;text-align:right;">11,514</div><div class="t" style="top:840.76px;font-size:14px;color:#333;left:631.35px;">$</div><div class="t" style="top:840.76px;font-size:14px;color:#2a2a2a;letter-spacing:-0.20px;left:110.00px;width:600px;text-align:right;">11,207</div><div class="t" style="top:840.76px;font-size:14px;color:#333;left:724.35px;">$</div><div class="t" style="top:840.76px;font-size:14px;color:#2a2a2a;letter-spacing:-0.20px;left:203.00px;width:600px;text-align:right;">9,186</div><div class="t" style="top:840.76px;font-size:14px;color:#333;left:817.35px;">$</div><div class="t" style="top:840.76px;font-size:14px;color:#2a2a2a;letter-spacing:-0.20px;left:296.00px;width:600px;text-align:right;">9,243</div><div class="t" style="top:840.76px;font-size:14px;color:#333;left:910.35px;">$</div><div class="t" style="top:840.76px;font-size:14px;color:#2a2a2a;letter-spacing:-0.20px;left:389.00px;width:600px;text-align:right;">10,003</div><div class="t" style="top:840.76px;font-size:14px;color:#333;left:1003.35px;">$</div><div class="t" style="top:840.76px;font-size:14px;color:#2a2a2a;letter-spacing:-0.20px;left:482.00px;width:600px;text-align:right;">11,092</div><div class="t" style="top:840.76px;font-size:14px;color:#333;left:1096.35px;">$</div><div class="t" style="top:840.76px;font-size:14px;color:#2a2a2a;letter-spacing:-0.20px;left:575.00px;width:600px;text-align:right;">10,761</div><div class="t" style="top:840.76px;font-size:14px;color:#333;left:1189.35px;">$</div><div class="t" style="top:840.76px;font-size:14px;color:#2a2a2a;letter-spacing:-0.20px;left:668.00px;width:600px;text-align:right;">9,032</div><div class="t" style="top:840.76px;font-size:14px;color:#333;left:1282.35px;">$</div><div class="t" style="top:840.76px;font-size:14px;color:#2a2a2a;letter-spacing:-0.20px;left:761.00px;width:600px;text-align:right;">10,366</div><div class="t" style="top:840.76px;font-size:14px;color:#333;left:1375.35px;">$</div><div class="t" style="top:840.76px;font-size:14px;color:#2a2a2a;letter-spacing:-0.20px;left:854.00px;width:600px;text-align:right;">9,571</div><div class="t" style="top:840.76px;font-size:14px;color:#333;left:1468.35px;">$</div><div class="t" style="top:840.76px;font-size:14px;color:#2a2a2a;letter-spacing:-0.20px;left:947.00px;width:600px;text-align:right;">11,774</div><svg class="abs" style="left:0;top:0;overflow:visible" width="1" height="1"><path d="M372.0 844.0 L377.3 843.5 L382.7 844.4 L388.0 850.3 L393.3 850.2 L398.6 847.9 L404.0 844.8 L409.3 845.7 L414.6 850.8 L419.9 846.9 L425.3 849.2 L430.6 842.8" stroke="#a2a6b8" stroke-width="1.6" fill="none" stroke-linejoin="round"/></svg><div class="t" style="top:859.59px;font-size:14px;color:#2a2a2a;letter-spacing:-0.20px;left:58.84px;">Outsourcing</div><div class="t" style="top:859.59px;font-size:14px;color:#333;left:264.35px;">$</div><div class="t" style="top:859.59px;font-size:14px;color:#2a2a2a;letter-spacing:-0.20px;left:-243.00px;width:600px;text-align:right;">126,086</div><div class="t" style="top:859.59px;font-size:14px;color:#333;left:445.35px;">$</div><div class="t" style="top:859.59px;font-size:14px;color:#2a2a2a;letter-spacing:-0.20px;left:-76.00px;width:600px;text-align:right;">9,562</div><div class="t" style="top:859.59px;font-size:14px;color:#333;left:538.35px;">$</div><div class="t" style="top:859.59px;font-size:14px;color:#2a2a2a;letter-spacing:-0.20px;left:17.00px;width:600px;text-align:right;">10,787</div><div class="t" style="top:859.59px;font-size:14px;color:#333;left:631.35px;">$</div><div class="t" style="top:859.59px;font-size:14px;color:#2a2a2a;letter-spacing:-0.20px;left:110.00px;width:600px;text-align:right;">11,809</div><div class="t" style="top:859.59px;font-size:14px;color:#333;left:724.35px;">$</div><div class="t" style="top:859.59px;font-size:14px;color:#2a2a2a;letter-spacing:-0.20px;left:203.00px;width:600px;text-align:right;">9,949</div><div class="t" style="top:859.59px;font-size:14px;color:#333;left:817.35px;">$</div><div class="t" style="top:859.59px;font-size:14px;color:#2a2a2a;letter-spacing:-0.20px;left:296.00px;width:600px;text-align:right;">9,559</div><div class="t" style="top:859.59px;font-size:14px;color:#333;left:910.35px;">$</div><div class="t" style="top:859.59px;font-size:14px;color:#2a2a2a;letter-spacing:-0.20px;left:389.00px;width:600px;text-align:right;">9,753</div><div class="t" style="top:859.59px;font-size:14px;color:#333;left:1003.35px;">$</div><div class="t" style="top:859.59px;font-size:14px;color:#2a2a2a;letter-spacing:-0.20px;left:482.00px;width:600px;text-align:right;">11,761</div><div class="t" style="top:859.59px;font-size:14px;color:#333;left:1096.35px;">$</div><div class="t" style="top:859.59px;font-size:14px;color:#2a2a2a;letter-spacing:-0.20px;left:575.00px;width:600px;text-align:right;">10,702</div><div class="t" style="top:859.59px;font-size:14px;color:#333;left:1189.35px;">$</div><div class="t" style="top:859.59px;font-size:14px;color:#2a2a2a;letter-spacing:-0.20px;left:668.00px;width:600px;text-align:right;">10,545</div><div class="t" style="top:859.59px;font-size:14px;color:#333;left:1282.35px;">$</div><div class="t" style="top:859.59px;font-size:14px;color:#2a2a2a;letter-spacing:-0.20px;left:761.00px;width:600px;text-align:right;">10,347</div><div class="t" style="top:859.59px;font-size:14px;color:#333;left:1375.35px;">$</div><div class="t" style="top:859.59px;font-size:14px;color:#2a2a2a;letter-spacing:-0.20px;left:854.00px;width:600px;text-align:right;">10,593</div><div class="t" style="top:859.59px;font-size:14px;color:#333;left:1468.35px;">$</div><div class="t" style="top:859.59px;font-size:14px;color:#2a2a2a;letter-spacing:-0.20px;left:947.00px;width:600px;text-align:right;">10,719</div><svg class="abs" style="left:0;top:0;overflow:visible" width="1" height="1"><path d="M372.0 869.6 L377.3 865.2 L382.7 861.6 L388.0 868.2 L393.3 869.6 L398.6 868.9 L404.0 861.8 L409.3 865.5 L414.6 866.1 L419.9 866.8 L425.3 865.9 L430.6 865.5" stroke="#a2a6b8" stroke-width="1.6" fill="none" stroke-linejoin="round"/></svg><div class="t" style="top:878.42px;font-size:14px;color:#2a2a2a;letter-spacing:-0.20px;left:58.42px;">Utilities</div><div class="t" style="top:878.42px;font-size:14px;color:#333;left:264.35px;">$</div><div class="t" style="top:878.42px;font-size:14px;color:#2a2a2a;letter-spacing:-0.20px;left:-243.00px;width:600px;text-align:right;">122,200</div><div class="t" style="top:878.42px;font-size:14px;color:#333;left:445.35px;">$</div><div class="t" style="top:878.42px;font-size:14px;color:#2a2a2a;letter-spacing:-0.20px;left:-76.00px;width:600px;text-align:right;">9,410</div><div class="t" style="top:878.42px;font-size:14px;color:#333;left:538.35px;">$</div><div class="t" style="top:878.42px;font-size:14px;color:#2a2a2a;letter-spacing:-0.20px;left:17.00px;width:600px;text-align:right;">9,646</div><div class="t" style="top:878.42px;font-size:14px;color:#333;left:631.35px;">$</div><div class="t" style="top:878.42px;font-size:14px;color:#2a2a2a;letter-spacing:-0.20px;left:110.00px;width:600px;text-align:right;">9,969</div><div class="t" style="top:878.42px;font-size:14px;color:#333;left:724.35px;">$</div><div class="t" style="top:878.42px;font-size:14px;color:#2a2a2a;letter-spacing:-0.20px;left:203.00px;width:600px;text-align:right;">10,758</div><div class="t" style="top:878.42px;font-size:14px;color:#333;left:817.35px;">$</div><div class="t" style="top:878.42px;font-size:14px;color:#2a2a2a;letter-spacing:-0.20px;left:296.00px;width:600px;text-align:right;">9,183</div><div class="t" style="top:878.42px;font-size:14px;color:#333;left:910.35px;">$</div><div class="t" style="top:878.42px;font-size:14px;color:#2a2a2a;letter-spacing:-0.20px;left:389.00px;width:600px;text-align:right;">10,777</div><div class="t" style="top:878.42px;font-size:14px;color:#333;left:1003.35px;">$</div><div class="t" style="top:878.42px;font-size:14px;color:#2a2a2a;letter-spacing:-0.20px;left:482.00px;width:600px;text-align:right;">11,249</div><div class="t" style="top:878.42px;font-size:14px;color:#333;left:1096.35px;">$</div><div class="t" style="top:878.42px;font-size:14px;color:#2a2a2a;letter-spacing:-0.20px;left:575.00px;width:600px;text-align:right;">9,763</div><div class="t" style="top:878.42px;font-size:14px;color:#333;left:1189.35px;">$</div><div class="t" style="top:878.42px;font-size:14px;color:#2a2a2a;letter-spacing:-0.20px;left:668.00px;width:600px;text-align:right;">9,445</div><div class="t" style="top:878.42px;font-size:14px;color:#333;left:1282.35px;">$</div><div class="t" style="top:878.42px;font-size:14px;color:#2a2a2a;letter-spacing:-0.20px;left:761.00px;width:600px;text-align:right;">11,218</div><div class="t" style="top:878.42px;font-size:14px;color:#333;left:1375.35px;">$</div><div class="t" style="top:878.42px;font-size:14px;color:#2a2a2a;letter-spacing:-0.20px;left:854.00px;width:600px;text-align:right;">10,579</div><div class="t" style="top:878.42px;font-size:14px;color:#333;left:1468.35px;">$</div><div class="t" style="top:878.42px;font-size:14px;color:#2a2a2a;letter-spacing:-0.20px;left:947.00px;width:600px;text-align:right;">10,203</div><svg class="abs" style="left:0;top:0;overflow:visible" width="1" height="1"><path d="M372.0 887.6 L377.3 886.6 L382.7 885.4 L388.0 882.3 L393.3 888.4 L398.6 882.3 L404.0 880.4 L409.3 886.2 L414.6 887.4 L419.9 880.6 L425.3 883.0 L430.6 884.5" stroke="#a2a6b8" stroke-width="1.6" fill="none" stroke-linejoin="round"/></svg><div class="t" style="top:897.25px;font-size:14px;color:#111;font-weight:bold;letter-spacing:0.20px;left:48.83px;">Operating Expenses</div><div class="t" style="top:897.25px;font-size:14px;color:#333;left:264.35px;">$</div><div class="t" style="top:897.25px;font-size:14px;color:#2a2a2a;letter-spacing:-0.20px;left:-243.00px;width:600px;text-align:right;">4,280,582</div><div class="t" style="top:897.25px;font-size:14px;color:#333;left:445.35px;">$</div><div class="t" style="top:897.25px;font-size:14px;color:#2a2a2a;letter-spacing:-0.20px;left:-76.00px;width:600px;text-align:right;">347,611</div><div class="t" style="top:897.25px;font-size:14px;color:#333;left:538.35px;">$</div><div class="t" style="top:897.25px;font-size:14px;color:#2a2a2a;letter-spacing:-0.20px;left:17.00px;width:600px;text-align:right;">365,859</div><div class="t" style="top:897.25px;font-size:14px;color:#333;left:631.35px;">$</div><div class="t" style="top:897.25px;font-size:14px;color:#2a2a2a;letter-spacing:-0.20px;left:110.00px;width:600px;text-align:right;">348,265</div><div class="t" style="top:897.25px;font-size:14px;color:#333;left:724.35px;">$</div><div class="t" style="top:897.25px;font-size:14px;color:#2a2a2a;letter-spacing:-0.20px;left:203.00px;width:600px;text-align:right;">349,320</div><div class="t" style="top:897.25px;font-size:14px;color:#333;left:817.35px;">$</div><div class="t" style="top:897.25px;font-size:14px;color:#2a2a2a;letter-spacing:-0.20px;left:296.00px;width:600px;text-align:right;">363,171</div><div class="t" style="top:897.25px;font-size:14px;color:#333;left:910.35px;">$</div><div class="t" style="top:897.25px;font-size:14px;color:#2a2a2a;letter-spacing:-0.20px;left:389.00px;width:600px;text-align:right;">334,414</div><div class="t" style="top:897.25px;font-size:14px;color:#333;left:1003.35px;">$</div><div class="t" style="top:897.25px;font-size:14px;color:#2a2a2a;letter-spacing:-0.20px;left:482.00px;width:600px;text-align:right;">370,840</div><div class="t" style="top:897.25px;font-size:14px;color:#333;left:1096.35px;">$</div><div class="t" style="top:897.25px;font-size:14px;color:#2a2a2a;letter-spacing:-0.20px;left:575.00px;width:600px;text-align:right;">354,717</div><div class="t" style="top:897.25px;font-size:14px;color:#333;left:1189.35px;">$</div><div class="t" style="top:897.25px;font-size:14px;color:#2a2a2a;letter-spacing:-0.20px;left:668.00px;width:600px;text-align:right;">357,170</div><div class="t" style="top:897.25px;font-size:14px;color:#333;left:1282.35px;">$</div><div class="t" style="top:897.25px;font-size:14px;color:#2a2a2a;letter-spacing:-0.20px;left:761.00px;width:600px;text-align:right;">350,181</div><div class="t" style="top:897.25px;font-size:14px;color:#333;left:1375.35px;">$</div><div class="t" style="top:897.25px;font-size:14px;color:#2a2a2a;letter-spacing:-0.20px;left:854.00px;width:600px;text-align:right;">374,363</div><div class="t" style="top:897.25px;font-size:14px;color:#333;left:1468.35px;">$</div><div class="t" style="top:897.25px;font-size:14px;color:#2a2a2a;letter-spacing:-0.20px;left:947.00px;width:600px;text-align:right;">364,671</div><svg class="abs" style="left:0;top:0;overflow:visible" width="1" height="1"><path d="M372.0 904.6 L377.3 901.0 L382.7 904.5 L388.0 904.3 L393.3 901.5 L398.6 907.3 L404.0 900.0 L409.3 903.2 L414.6 902.7 L419.9 904.1 L425.3 899.3 L430.6 901.2" stroke="#6f7fa8" stroke-width="1.7" fill="none" stroke-linejoin="round"/></svg><div class="t" style="top:934.91px;font-size:14px;color:#111;font-weight:bold;letter-spacing:-0.40px;left:48.46px;">EBITDA</div><div class="t" style="top:934.91px;font-size:14px;color:#333;left:264.35px;">$</div><div class="t" style="top:934.91px;font-size:14px;color:#2a2a2a;letter-spacing:-0.20px;left:-243.00px;width:600px;text-align:right;">13,842,184</div><div class="t" style="top:934.91px;font-size:14px;color:#333;left:445.35px;">$</div><div class="t" style="top:934.91px;font-size:14px;color:#2a2a2a;letter-spacing:-0.20px;left:-76.00px;width:600px;text-align:right;">1,199,463</div><div class="t" style="top:934.91px;font-size:14px;color:#333;left:538.35px;">$</div><div class="t" style="top:934.91px;font-size:14px;color:#2a2a2a;letter-spacing:-0.20px;left:17.00px;width:600px;text-align:right;">1,618,955</div><div class="t" style="top:934.91px;font-size:14px;color:#333;left:631.35px;">$</div><div class="t" style="top:934.91px;font-size:14px;color:#2a2a2a;letter-spacing:-0.20px;left:110.00px;width:600px;text-align:right;">1,254,663</div><div class="t" style="top:934.91px;font-size:14px;color:#333;left:724.35px;">$</div><div class="t" style="top:934.91px;font-size:14px;color:#2a2a2a;letter-spacing:-0.20px;left:203.00px;width:600px;text-align:right;">901,100</div><div class="t" style="top:934.91px;font-size:14px;color:#333;left:817.35px;">$</div><div class="t" style="top:934.91px;font-size:14px;color:#2a2a2a;letter-spacing:-0.20px;left:296.00px;width:600px;text-align:right;">1,182,784</div><div class="t" style="top:934.91px;font-size:14px;color:#333;left:910.35px;">$</div><div class="t" style="top:934.91px;font-size:14px;color:#2a2a2a;letter-spacing:-0.20px;left:389.00px;width:600px;text-align:right;">1,436,115</div><div class="t" style="top:934.91px;font-size:14px;color:#333;left:1003.35px;">$</div><div class="t" style="top:934.91px;font-size:14px;color:#2a2a2a;letter-spacing:-0.20px;left:482.00px;width:600px;text-align:right;">566,439</div><div class="t" style="top:934.91px;font-size:14px;color:#333;left:1096.35px;">$</div><div class="t" style="top:934.91px;font-size:14px;color:#2a2a2a;letter-spacing:-0.20px;left:575.00px;width:600px;text-align:right;">865,650</div><div class="t" style="top:934.91px;font-size:14px;color:#333;left:1189.35px;">$</div><div class="t" style="top:934.91px;font-size:14px;color:#2a2a2a;letter-spacing:-0.20px;left:668.00px;width:600px;text-align:right;">1,397,687</div><div class="t" style="top:934.91px;font-size:14px;color:#333;left:1282.35px;">$</div><div class="t" style="top:934.91px;font-size:14px;color:#2a2a2a;letter-spacing:-0.20px;left:761.00px;width:600px;text-align:right;">846,838</div><div class="t" style="top:934.91px;font-size:14px;color:#333;left:1375.35px;">$</div><div class="t" style="top:934.91px;font-size:14px;color:#2a2a2a;letter-spacing:-0.20px;left:854.00px;width:600px;text-align:right;">1,474,458</div><div class="t" style="top:934.91px;font-size:14px;color:#333;left:1468.35px;">$</div><div class="t" style="top:934.91px;font-size:14px;color:#2a2a2a;letter-spacing:-0.20px;left:947.00px;width:600px;text-align:right;">1,098,032</div><svg class="abs" style="left:0;top:0;overflow:visible" width="1" height="1"><path d="M372.0 940.1 L377.3 936.9 L382.7 939.7 L388.0 942.4 L393.3 940.2 L398.6 938.3 L404.0 944.9 L409.3 942.7 L414.6 938.6 L419.9 942.8 L425.3 938.0 L430.6 940.9" stroke="#6f7fa8" stroke-width="1.7" fill="none" stroke-linejoin="round"/></svg><div class="t" style="top:972.57px;font-size:14px;color:#2a2a2a;letter-spacing:-0.20px;left:58.21px;">Interest Expense</div><div class="t" style="top:972.57px;font-size:14px;color:#333;left:264.35px;">$</div><div class="t" style="top:972.57px;font-size:14px;color:#2a2a2a;letter-spacing:-0.20px;left:-243.00px;width:600px;text-align:right;">11,851</div><div class="t" style="top:972.57px;font-size:14px;color:#333;left:445.35px;">$</div><div class="t" style="top:972.57px;font-size:14px;color:#2a2a2a;letter-spacing:-0.20px;left:-76.00px;width:600px;text-align:right;">1,038</div><div class="t" style="top:972.57px;font-size:14px;color:#333;left:538.35px;">$</div><div class="t" style="top:972.57px;font-size:14px;color:#2a2a2a;letter-spacing:-0.20px;left:17.00px;width:600px;text-align:right;">1,430</div><div class="t" style="top:972.57px;font-size:14px;color:#333;left:631.35px;">$</div><div class="t" style="top:972.57px;font-size:14px;color:#2a2a2a;letter-spacing:-0.20px;left:110.00px;width:600px;text-align:right;">627</div><div class="t" style="top:972.57px;font-size:14px;color:#333;left:724.35px;">$</div><div class="t" style="top:972.57px;font-size:14px;color:#2a2a2a;letter-spacing:-0.20px;left:203.00px;width:600px;text-align:right;">1,352</div><div class="t" style="top:972.57px;font-size:14px;color:#333;left:817.35px;">$</div><div class="t" style="top:972.57px;font-size:14px;color:#2a2a2a;letter-spacing:-0.20px;left:296.00px;width:600px;text-align:right;">765</div><div class="t" style="top:972.57px;font-size:14px;color:#333;left:910.35px;">$</div><div class="t" style="top:972.57px;font-size:14px;color:#2a2a2a;letter-spacing:-0.20px;left:389.00px;width:600px;text-align:right;">1,190</div><div class="t" style="top:972.57px;font-size:14px;color:#333;left:1003.35px;">$</div><div class="t" style="top:972.57px;font-size:14px;color:#2a2a2a;letter-spacing:-0.20px;left:482.00px;width:600px;text-align:right;">1,082</div><div class="t" style="top:972.57px;font-size:14px;color:#333;left:1096.35px;">$</div><div class="t" style="top:972.57px;font-size:14px;color:#2a2a2a;letter-spacing:-0.20px;left:575.00px;width:600px;text-align:right;">1,261</div><div class="t" style="top:972.57px;font-size:14px;color:#333;left:1189.35px;">$</div><div class="t" style="top:972.57px;font-size:14px;color:#2a2a2a;letter-spacing:-0.20px;left:668.00px;width:600px;text-align:right;">1,240</div><div class="t" style="top:972.57px;font-size:14px;color:#333;left:1282.35px;">$</div><div class="t" style="top:972.57px;font-size:14px;color:#2a2a2a;letter-spacing:-0.20px;left:761.00px;width:600px;text-align:right;">645</div><div class="t" style="top:972.57px;font-size:14px;color:#333;left:1375.35px;">$</div><div class="t" style="top:972.57px;font-size:14px;color:#2a2a2a;letter-spacing:-0.20px;left:854.00px;width:600px;text-align:right;">552</div><div class="t" style="top:972.57px;font-size:14px;color:#333;left:1468.35px;">$</div><div class="t" style="top:972.57px;font-size:14px;color:#2a2a2a;letter-spacing:-0.20px;left:947.00px;width:600px;text-align:right;">669</div><svg class="abs" style="left:0;top:0;overflow:visible" width="1" height="1"><path d="M372.0 978.2 L377.3 974.6 L382.7 981.9 L388.0 975.3 L393.3 980.6 L398.6 976.8 L404.0 977.8 L409.3 976.1 L414.6 976.3 L419.9 981.7 L425.3 982.6 L430.6 981.5" stroke="#a2a6b8" stroke-width="1.6" fill="none" stroke-linejoin="round"/></svg><div class="t" style="top:991.40px;font-size:14px;color:#2a2a2a;letter-spacing:-0.20px;left:58.21px;">Interest Income</div><div class="t" style="top:991.40px;font-size:14px;color:#333;left:264.35px;">$</div><div class="t" style="top:991.40px;font-size:14px;color:#2a2a2a;letter-spacing:-0.20px;left:-243.00px;width:600px;text-align:right;">12,813</div><div class="t" style="top:991.40px;font-size:14px;color:#333;left:445.35px;">$</div><div class="t" style="top:991.40px;font-size:14px;color:#2a2a2a;letter-spacing:-0.20px;left:-76.00px;width:600px;text-align:right;">1,227</div><div class="t" style="top:991.40px;font-size:14px;color:#333;left:538.35px;">$</div><div class="t" style="top:991.40px;font-size:14px;color:#2a2a2a;letter-spacing:-0.20px;left:17.00px;width:600px;text-align:right;">1,372</div><div class="t" style="top:991.40px;font-size:14px;color:#333;left:631.35px;">$</div><div class="t" style="top:991.40px;font-size:14px;color:#2a2a2a;letter-spacing:-0.20px;left:110.00px;width:600px;text-align:right;">544</div><div class="t" style="top:991.40px;font-size:14px;color:#333;left:724.35px;">$</div><div class="t" style="top:991.40px;font-size:14px;color:#2a2a2a;letter-spacing:-0.20px;left:203.00px;width:600px;text-align:right;">1,172</div><div class="t" style="top:991.40px;font-size:14px;color:#333;left:817.35px;">$</div><div class="t" style="top:991.40px;font-size:14px;color:#2a2a2a;letter-spacing:-0.20px;left:296.00px;width:600px;text-align:right;">1,479</div><div class="t" style="top:991.40px;font-size:14px;color:#333;left:910.35px;">$</div><div class="t" style="top:991.40px;font-size:14px;color:#2a2a2a;letter-spacing:-0.20px;left:389.00px;width:600px;text-align:right;">821</div><div class="t" style="top:991.40px;font-size:14px;color:#333;left:1003.35px;">$</div><div class="t" style="top:991.40px;font-size:14px;color:#2a2a2a;letter-spacing:-0.20px;left:482.00px;width:600px;text-align:right;">891</div><div class="t" style="top:991.40px;font-size:14px;color:#333;left:1096.35px;">$</div><div class="t" style="top:991.40px;font-size:14px;color:#2a2a2a;letter-spacing:-0.20px;left:575.00px;width:600px;text-align:right;">1,361</div><div class="t" style="top:991.40px;font-size:14px;color:#333;left:1189.35px;">$</div><div class="t" style="top:991.40px;font-size:14px;color:#2a2a2a;letter-spacing:-0.20px;left:668.00px;width:600px;text-align:right;">1,187</div><div class="t" style="top:991.40px;font-size:14px;color:#333;left:1282.35px;">$</div><div class="t" style="top:991.40px;font-size:14px;color:#2a2a2a;letter-spacing:-0.20px;left:761.00px;width:600px;text-align:right;">760</div><div class="t" style="top:991.40px;font-size:14px;color:#333;left:1375.35px;">$</div><div class="t" style="top:991.40px;font-size:14px;color:#2a2a2a;letter-spacing:-0.20px;left:854.00px;width:600px;text-align:right;">1,126</div><div class="t" style="top:991.40px;font-size:14px;color:#333;left:1468.35px;">$</div><div class="t" style="top:991.40px;font-size:14px;color:#2a2a2a;letter-spacing:-0.20px;left:947.00px;width:600px;text-align:right;">873</div><svg class="abs" style="left:0;top:0;overflow:visible" width="1" height="1"><path d="M372.0 995.6 L377.3 994.3 L382.7 1001.4 L388.0 996.0 L393.3 993.4 L398.6 999.0 L404.0 998.5 L409.3 994.4 L414.6 995.9 L419.9 999.6 L425.3 996.4 L430.6 998.6" stroke="#a2a6b8" stroke-width="1.6" fill="none" stroke-linejoin="round"/></svg><div class="abs" style="left:0px;top:1008px;width:2000px;height:35px;background:#ededed;border-top:1px solid #d0d0d0"></div><svg class="abs" style="left:26px;top:1019px" width="50" height="14" viewBox="0 0 50 14"><path d="M8 2 L3 7 L8 12 Z" fill="#c4c4c4"/><path d="M37 2 L42 7 L37 12 Z" fill="#9c9c9c"/></svg><div class="abs" style="left:120px;top:1008px;width:83px;height:31px;background:#fff;border-left:1px solid #d0d0d0;border-right:1px solid #d0d0d0;border-bottom:3px solid #217346"></div><div class="t" style="top:1014.58px;font-size:16.5px;color:#217346;font-weight:bold;letter-spacing:-0.43px;left:-138.97px;width:600px;text-align:center;">Sheet1</div><svg class="abs" style="left:244px;top:1015px" width="22" height="22" viewBox="0 0 22 22"><circle cx="11" cy="11" r="9" stroke="#555" stroke-width="1.8" fill="none"/><path d="M11 6 V16 M6 11 H16" stroke="#555" stroke-width="1.8"/></svg><div class="abs" style="left:1165.5px;top:1021px;width:3px;height:3px;background:#666;border-radius:50%"></div><div class="abs" style="left:1165.5px;top:1026px;width:3px;height:3px;background:#666;border-radius:50%"></div><div class="abs" style="left:1165.5px;top:1031px;width:3px;height:3px;background:#666;border-radius:50%"></div><div class="abs" style="left:1185px;top:1017px;width:794px;height:18px;background:#dcdcdc;border:1px solid #b0b0b0"></div><div class="abs" style="left:1185px;top:1017px;width:18px;height:18px;background:#fff;border:1px solid #a8a8a8"></div><svg class="abs" style="left:1185px;top:1017px" width="18" height="18" viewBox="0 0 18 18"><path d="M11 5 L6 9 L11 13 Z" fill="#666"/></svg><div class="abs" style="left:1203px;top:1017px;width:420px;height:18px;background:#fff;border:1px solid #a8a8a8"></div><div class="abs" style="left:1960px;top:1017px;width:18px;height:18px;background:#fff;border:1px solid #a8a8a8"></div><svg class="abs" style="left:1960px;top:1017px" width="18" height="18" viewBox="0 0 18 18"><path d="M7 5 L12 9 L7 13 Z" fill="#666"/></svg><div class="abs" style="left:1983px;top:396px;width:17px;height:612px;background:#dcdcdc;border-left:1px solid #a8a8a8"></div><div class="abs" style="left:1983px;top:396px;width:17px;height:18px;background:#fff;border:1px solid #a8a8a8"></div><svg class="abs" style="left:1983px;top:396px" width="17" height="18" viewBox="0 0 17 18"><path d="M4 11 L8.5 6 L13 11 Z" fill="#555"/></svg><div class="abs" style="left:1983px;top:414px;width:17px;height:257px;background:#fff;border:1px solid #a8a8a8"></div><div class="abs" style="left:1983px;top:990px;width:17px;height:18px;background:#fff;border:1px solid #a8a8a8"></div><svg class="abs" style="left:1983px;top:990px" width="17" height="18" viewBox="0 0 17 18"><path d="M4 7 L8.5 12 L13 7 Z" fill="#555"/></svg><div class="abs" style="left:0px;top:1043px;width:2000px;height:27px;background:#217346;"></div><div class="t" style="top:1050.62px;font-size:15px;color:#e2f0e6;letter-spacing:-0.96px;left:7.02px;">Ready</div><div class="abs" style="left:1744px;top:1058px;width:14px;height:2px;background:#cfe6d7;"></div><div class="abs" style="left:1767px;top:1058px;width:150px;height:1px;background:#cfe6d7;"></div><div class="abs" style="left:1812px;top:1052px;width:5px;height:12px;background:#e8f3ec;"></div><div class="abs" style="left:1841px;top:1054px;width:1px;height:8px;background:#cfe6d7;"></div><svg class="abs" style="left:1924px;top:1050px" width="16" height="16" viewBox="0 0 16 16"><path d="M8 1 V15 M1 8 H15" stroke="#e0efe5" stroke-width="1.6"/></svg><div class="t" style="top:1050.94px;font-size:13px;color:#e0efe5;left:1954.33px;">75%</div></body></html>
